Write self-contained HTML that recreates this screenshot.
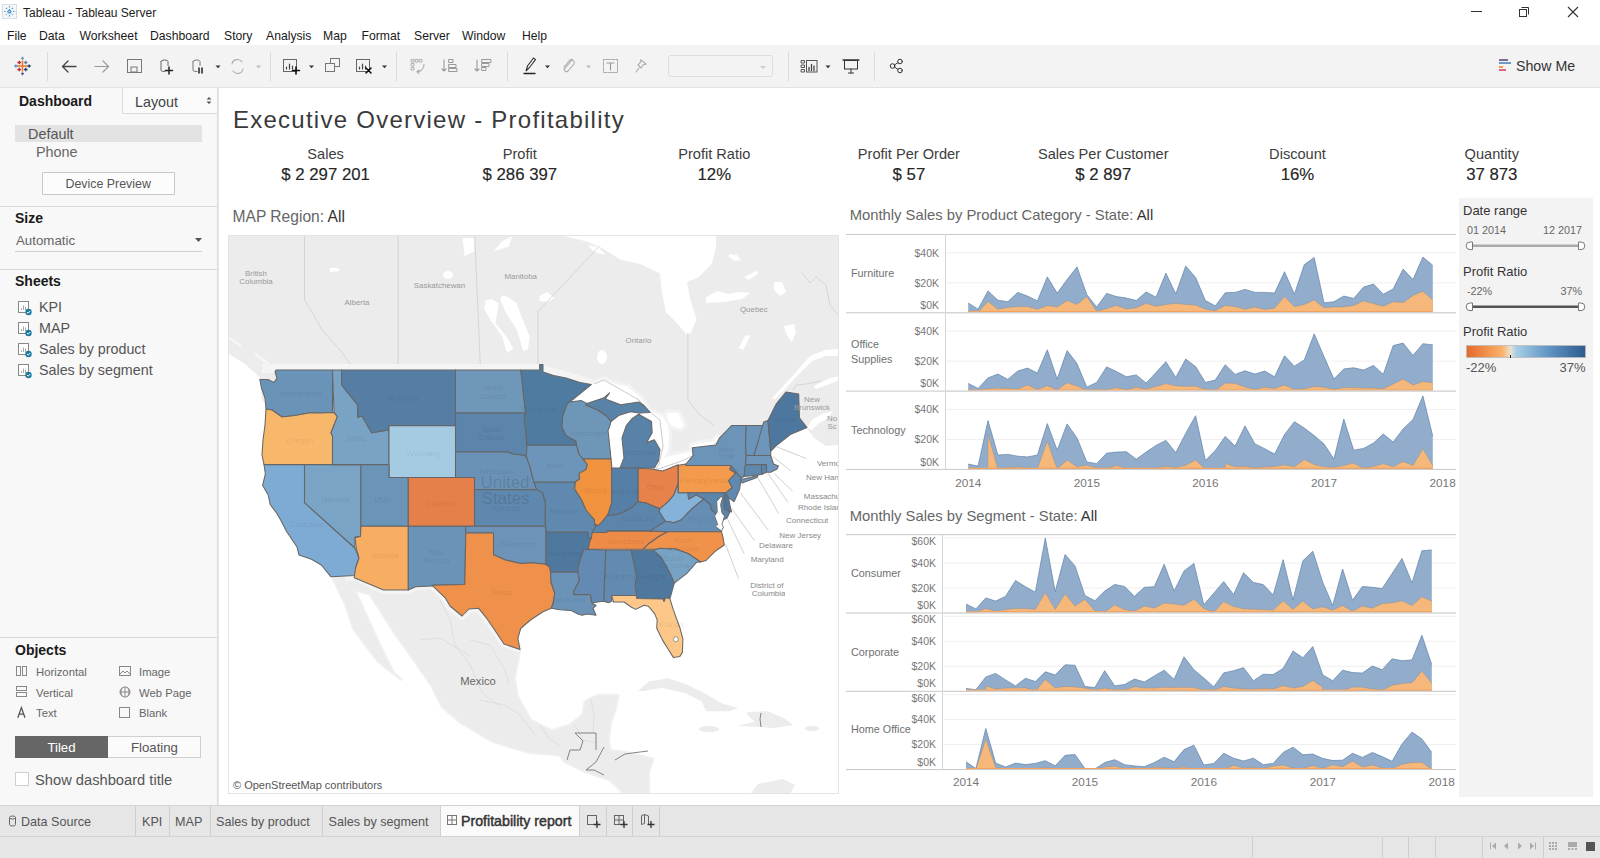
<!DOCTYPE html>
<html><head><meta charset="utf-8">
<style>
*{margin:0;padding:0;box-sizing:border-box}
html,body{width:1600px;height:858px;overflow:hidden;background:#fff;font-family:"Liberation Sans",sans-serif;color:#333}
.a{position:absolute;white-space:nowrap}
svg{position:absolute;overflow:visible}
</style></head><body>
<div class="a" style="left:0px;top:0px;width:1600px;height:45px;background:#fff;"></div>
<svg style="left:2px;top:4px" width="16" height="16" viewBox="0 0 16 16">
<rect x="0.5" y="0.5" width="14" height="14" fill="#f4f6f8" stroke="#d8dde2"/>
<g stroke="#5b9bd5" stroke-width="1.2"><path d="M7.5 2v11M2 7.5h11M4 4l7 7M11 4l-7 7" stroke-dasharray="1.6 1.4"/></g>
</svg><div class="a" style="left:23px;top:7.14px;font-size:12px;line-height:12px;color:#222;">Tableau - Tableau Server</div>
<div class="a" style="left:1471px;top:11px;width:11px;height:1px;background:#333;"></div>
<svg style="left:1518px;top:6px" width="12" height="12"><rect x="1.5" y="3.5" width="7" height="7" fill="none" stroke="#333"/><path d="M3.5 1.5h7v7" fill="none" stroke="#333"/></svg><svg style="left:1567px;top:6px" width="12" height="12"><path d="M1 1L11 11M11 1L1 11" stroke="#333" stroke-width="1.1"/></svg><div class="a" style="left:7px;top:30.47px;font-size:12.2px;line-height:12.2px;color:#1a1a1a;">File</div>
<div class="a" style="left:39px;top:30.47px;font-size:12.2px;line-height:12.2px;color:#1a1a1a;">Data</div>
<div class="a" style="left:79.5px;top:30.47px;font-size:12.2px;line-height:12.2px;color:#1a1a1a;">Worksheet</div>
<div class="a" style="left:150px;top:30.47px;font-size:12.2px;line-height:12.2px;color:#1a1a1a;">Dashboard</div>
<div class="a" style="left:224px;top:30.47px;font-size:12.2px;line-height:12.2px;color:#1a1a1a;">Story</div>
<div class="a" style="left:266px;top:30.47px;font-size:12.2px;line-height:12.2px;color:#1a1a1a;">Analysis</div>
<div class="a" style="left:323px;top:30.47px;font-size:12.2px;line-height:12.2px;color:#1a1a1a;">Map</div>
<div class="a" style="left:361.5px;top:30.47px;font-size:12.2px;line-height:12.2px;color:#1a1a1a;">Format</div>
<div class="a" style="left:414px;top:30.47px;font-size:12.2px;line-height:12.2px;color:#1a1a1a;">Server</div>
<div class="a" style="left:462px;top:30.47px;font-size:12.2px;line-height:12.2px;color:#1a1a1a;">Window</div>
<div class="a" style="left:522px;top:30.47px;font-size:12.2px;line-height:12.2px;color:#1a1a1a;">Help</div>
<div class="a" style="left:0px;top:45px;width:1600px;height:43px;background:#f3f3f3;"></div>
<div class="a" style="left:0px;top:87px;width:1600px;height:1px;background:#e3e3e3;"></div>
<div class="a" style="left:47px;top:52px;width:1px;height:29px;background:#dadada;"></div>
<div class="a" style="left:270px;top:52px;width:1px;height:29px;background:#dadada;"></div>
<div class="a" style="left:396px;top:52px;width:1px;height:29px;background:#dadada;"></div>
<div class="a" style="left:507px;top:52px;width:1px;height:29px;background:#dadada;"></div>
<div class="a" style="left:788px;top:52px;width:1px;height:29px;background:#dadada;"></div>
<div class="a" style="left:874px;top:52px;width:1px;height:29px;background:#dadada;"></div>

<svg style="left:0;top:45px" width="1600" height="43" viewBox="0 45 1600 43">
<g fill="none" stroke-linecap="round">
 <!-- tableau logo -->
 <g stroke-width="1.3" stroke-linecap="butt">
  <path d="M17 66h11M22.5 60.5v11" stroke="#e8762d" stroke-width="1.6"/>
  <path d="M17.5 62.5h3.5M19.25 60.75v3.5" stroke="#c72035"/>
  <path d="M24 62.5h3.5M25.75 60.75v3.5" stroke="#5b879b"/>
  <path d="M17.5 69.5h3.5M19.25 67.75v3.5" stroke="#c72035"/>
  <path d="M24 69.5h3.5M25.75 67.75v3.5" stroke="#1f457e"/>
  <path d="M21 58.3h3M22.5 56.8v3" stroke="#7099a6"/>
  <path d="M21 73.7h3M22.5 72.2v3" stroke="#5b6591"/>
  <path d="M14.3 66h3M15.8 64.5v3" stroke="#5b8fc2"/>
  <path d="M27.7 66h3M29.2 64.5v3" stroke="#1f447e"/>
 </g>
 <!-- back/forward -->
 <path d="M76 66.5H63M68 61l-5.5 5.5L68 72" stroke="#444" stroke-width="1.3"/>
 <path d="M95 66.5h13M103 61l5.5 5.5L103 72" stroke="#9a9a9a" stroke-width="1.2"/>
 <!-- save -->
 <rect x="127.5" y="59.5" width="14" height="13" stroke="#777" stroke-width="1"/>
 <rect x="131" y="67" width="6" height="5" stroke="#777" stroke-width="1"/>
 <!-- new data source -->
 <path d="M161 61.5v9a3.5 1.5 0 0 0 4 1M161 61.5a3.5 1.5 0 0 1 7 0v4" stroke="#666" stroke-width="1"/>
 <path d="M169 67v7M165.5 70.5h7" stroke="#222" stroke-width="1.5"/>
 <!-- pause -->
 <path d="M193 61.5v9a3.5 1.5 0 0 0 4 1M193 61.5a3.5 1.5 0 0 1 7 0v4" stroke="#777" stroke-width="1"/>
 <path d="M199 68v5M202 68v5" stroke="#222" stroke-width="1.5"/>
 <!-- refresh -->
 <path d="M232 64a5.5 5.5 0 0 1 10-2M243 69a5.5 5.5 0 0 1-10 2" stroke="#aaa" stroke-width="1.1"/>
 <!-- new worksheet -->
 <rect x="283.5" y="59.5" width="13" height="12" stroke="#666"/>
 <path d="M286.5 69v-2M289.5 69v-5M292.5 69v-3" stroke="#444" stroke-width="1.2"/>
 <path d="M296 67v7M292.5 70.5h7" stroke="#111" stroke-width="1.6"/>
 <!-- duplicate -->
 <rect x="330.5" y="58.5" width="9" height="8" stroke="#777"/>
 <rect x="325.5" y="63.5" width="9" height="8" stroke="#777" fill="#f3f3f3"/>
 <!-- clear -->
 <rect x="356.5" y="59.5" width="13" height="12" stroke="#666"/>
 <path d="M359.5 69v-2M362.5 69v-5M365.5 69v-3" stroke="#444" stroke-width="1.2"/>
 <path d="M366 68l5 5M371 68l-5 5" stroke="#111" stroke-width="1.6"/>
 <!-- swap -->
 <path d="M411.5 59.5h2.5v2.5h-2.5zM415.5 59.5h2.5v2.5h-2.5zM419.5 59.5h2.5v2.5h-2.5zM411.5 63.5h2.5v2.5h-2.5zM411.5 67.5h2.5v2.5h-2.5z" stroke="#aaa" stroke-width="0.9"/>
 <path d="M424 64.5c0 4-3 7-7 7.5M419 70l-2 1.8 2 1.7" stroke="#aaa" stroke-width="1.1"/>
 <!-- sort -->
 <path d="M444 60v11M442 69l2 2 2-2" stroke="#999" stroke-width="1.1"/>
 <path d="M449 59.5h4v3h-4zM449 64.5h7v3h-7zM449 68.5h8v3h-8z" stroke="#999" stroke-width="1"/>
 <path d="M477 60v11M475 69l2 2 2-2" stroke="#999" stroke-width="1.1"/>
 <path d="M482 59.5h9v3h-9zM482 63.5h7v3h-7zM482 67.5h4v3h-4z" stroke="#999" stroke-width="1"/>
 <!-- highlight -->
 <path d="M526 71l1.5-5 6-8 2 1.5-6 8z" stroke="#333" stroke-width="1.1"/>
 <path d="M524 73.5h11" stroke="#222" stroke-width="1.3"/>
 <!-- paperclip -->
 <path d="M572 60l-7 8a2 2 0 0 0 3 3l6-7a3 3 0 0 0-4-4l-6 7" stroke="#aaa" stroke-width="1.1"/>
 <!-- textbox -->
 <rect x="603.5" y="59.5" width="14" height="13" stroke="#aaa" stroke-dasharray="1.5 1"/>
 <path d="M607 63h7M610.5 63v7" stroke="#999" stroke-width="1.1"/>
 <!-- pin -->
 <path d="M641 60l5 4-3 1-2 3-3-3 2-2zM639 68l-3 4" stroke="#aaa" stroke-width="1.1"/>
 <!-- fit dropdown box -->
 <rect x="668.5" y="55.5" width="104" height="21" rx="2" stroke="#ddd" fill="#f3f3f3"/>
 <path d="M760 66h6l-3 3z" fill="#ccc"/>
 <!-- cards -->
 <path d="M801.5 60.5h3v2.5h-3zM801.5 65h3v2.5h-3zM801.5 69.5h3v2.5h-3z" stroke="#555"/>
 <rect x="806.5" y="60.5" width="10.5" height="11.5" stroke="#555"/>
 <path d="M809 70.5v-3M811.5 70.5v-6M814 70.5v-4.5" stroke="#444" stroke-width="1.3"/>
 <!-- presentation -->
 <path d="M843 60h16" stroke="#333" stroke-width="1.3"/>
 <rect x="844.5" y="60.5" width="13" height="8.5" stroke="#333"/>
 <path d="M851 69v4M848.5 73h5" stroke="#333"/>
 <!-- share -->
 <circle cx="892.5" cy="66" r="2.3" stroke="#333"/>
 <circle cx="900" cy="61.5" r="2.3" stroke="#333"/>
 <circle cx="900" cy="70.5" r="2.3" stroke="#333"/>
 <path d="M894.5 65l3.5-2.5M894.5 67l3.5 2.5" stroke="#333"/>
</g>
<g fill="#333">
 <path d="M215.5 65.5h5l-2.5 2.8z"/>
 <path d="M309 65.5h5l-2.5 2.8z"/>
 <path d="M382 65.5h5l-2.5 2.8z"/>
 <path d="M545 65.5h5l-2.5 2.8z"/>
 <path d="M825.5 65.5h5l-2.5 2.8z"/>
</g>
<g fill="#bbb">
 <path d="M256 65.5h5l-2.5 2.8z"/>
 <path d="M586 65.5h5l-2.5 2.8z"/>
</g>
<!-- show me -->
<rect x="1499" y="59" width="9" height="2" fill="#7b6a93"/>
<rect x="1499" y="62" width="12" height="2" fill="#6b99c8"/>
<rect x="1499" y="66" width="4" height="2" fill="#f09a4a"/>
<rect x="1499" y="69" width="7" height="2" fill="#e8637a"/>
</svg>
<div class="a" style="left:1516px;top:58.98px;font-size:14.2px;line-height:14.2px;color:#333;">Show Me</div>
<div class="a" style="left:0px;top:88px;width:218px;height:717px;background:#f8f8f8;"></div>
<div class="a" style="left:217px;top:88px;width:1px;height:717px;background:#dcdcdc;"></div>
<div class="a" style="left:122px;top:88px;width:95px;height:26px;background:#fafafa;border-left:1px solid #dcdcdc;border-bottom:1px solid #dcdcdc;"></div>
<div class="a" style="left:19px;top:94.15px;font-size:14px;line-height:14px;color:#1a1a1a;font-weight:700;">Dashboard</div>
<div class="a" style="left:135px;top:94.90px;font-size:14.3px;line-height:14.3px;color:#444;">Layout</div>
<svg style="left:206px;top:96px" width="6" height="10"><path d="M0.5 3.5L3 1 5.5 3.5zM0.5 5.5L3 8 5.5 5.5z" fill="#555"/></svg><div class="a" style="left:15px;top:125px;width:187px;height:17px;background:#e3e3e3;"></div>
<div class="a" style="left:28px;top:126.81px;font-size:14.4px;line-height:14.4px;color:#555;">Default</div>
<div class="a" style="left:36px;top:144.81px;font-size:14.4px;line-height:14.4px;color:#666;">Phone</div>
<div class="a" style="left:42px;top:172px;width:133px;height:23px;background:#fcfcfc;border:1px solid #c8c8c8;border-radius:1px;"></div>
<div class="a" style="left:65.5px;top:178.00px;font-size:12.4px;line-height:12.4px;color:#555;">Device Preview</div>
<div class="a" style="left:0px;top:206px;width:217px;height:1px;background:#dadada;"></div>
<div class="a" style="left:15px;top:211.45px;font-size:14px;line-height:14px;color:#1a1a1a;font-weight:700;">Size</div>
<div class="a" style="left:16px;top:233.74px;font-size:13.3px;line-height:13.3px;color:#666;">Automatic</div>
<div class="a" style="left:15px;top:251px;width:187px;height:1px;background:#cfcfcf;"></div>
<svg style="left:195px;top:238px" width="8" height="5"><path d="M0 0h7l-3.5 4z" fill="#555"/></svg><div class="a" style="left:0px;top:269px;width:217px;height:1px;background:#dadada;"></div>
<div class="a" style="left:15px;top:274.15px;font-size:14px;line-height:14px;color:#1a1a1a;font-weight:700;">Sheets</div>
<svg style="left:17px;top:300.09999999999997px" width="16" height="16"><rect x="1.5" y="1.5" width="10" height="11" fill="#fff" stroke="#888"/><path d="M4.5 10V8M6.5 10V5.5M8.5 10V6.5" stroke="#aaa" stroke-width="1"/><circle cx="11.5" cy="12" r="3.2" fill="#1c7aa0"/><path d="M10 12l1.2 1.2 2-2.2" stroke="#fff" stroke-width="1" fill="none"/></svg><div class="a" style="left:39px;top:300.30px;font-size:14.3px;line-height:14.3px;color:#555;">KPI</div>
<svg style="left:17px;top:321.09999999999997px" width="16" height="16"><rect x="1.5" y="1.5" width="10" height="11" fill="#fff" stroke="#888"/><path d="M4.5 10V8M6.5 10V5.5M8.5 10V6.5" stroke="#aaa" stroke-width="1"/><circle cx="11.5" cy="12" r="3.2" fill="#1c7aa0"/><path d="M10 12l1.2 1.2 2-2.2" stroke="#fff" stroke-width="1" fill="none"/></svg><div class="a" style="left:39px;top:321.30px;font-size:14.3px;line-height:14.3px;color:#555;">MAP</div>
<svg style="left:17px;top:342.09999999999997px" width="16" height="16"><rect x="1.5" y="1.5" width="10" height="11" fill="#fff" stroke="#888"/><path d="M4.5 10V8M6.5 10V5.5M8.5 10V6.5" stroke="#aaa" stroke-width="1"/><circle cx="11.5" cy="12" r="3.2" fill="#1c7aa0"/><path d="M10 12l1.2 1.2 2-2.2" stroke="#fff" stroke-width="1" fill="none"/></svg><div class="a" style="left:39px;top:342.30px;font-size:14.3px;line-height:14.3px;color:#555;">Sales by product</div>
<svg style="left:17px;top:363.09999999999997px" width="16" height="16"><rect x="1.5" y="1.5" width="10" height="11" fill="#fff" stroke="#888"/><path d="M4.5 10V8M6.5 10V5.5M8.5 10V6.5" stroke="#aaa" stroke-width="1"/><circle cx="11.5" cy="12" r="3.2" fill="#1c7aa0"/><path d="M10 12l1.2 1.2 2-2.2" stroke="#fff" stroke-width="1" fill="none"/></svg><div class="a" style="left:39px;top:363.30px;font-size:14.3px;line-height:14.3px;color:#555;">Sales by segment</div>
<div class="a" style="left:0px;top:637px;width:217px;height:1px;background:#dadada;"></div>
<div class="a" style="left:15px;top:643.15px;font-size:14px;line-height:14px;color:#1a1a1a;font-weight:700;">Objects</div>
<div class="a" style="left:36px;top:667.03px;font-size:11.3px;line-height:11.3px;color:#666;">Horizontal</div>
<div class="a" style="left:139px;top:667.03px;font-size:11.3px;line-height:11.3px;color:#666;">Image</div>
<div class="a" style="left:36px;top:687.63px;font-size:11.3px;line-height:11.3px;color:#666;">Vertical</div>
<div class="a" style="left:139px;top:687.63px;font-size:11.3px;line-height:11.3px;color:#666;">Web Page</div>
<div class="a" style="left:36px;top:708.23px;font-size:11.3px;line-height:11.3px;color:#666;">Text</div>
<div class="a" style="left:139px;top:708.23px;font-size:11.3px;line-height:11.3px;color:#666;">Blank</div>
<svg style="left:0;top:660px" width="217" height="70" viewBox="0 660 217 70">
<g fill="none" stroke="#888" stroke-width="1">
<rect x="16.5" y="666.5" width="4" height="9"/><rect x="22.5" y="666.5" width="4" height="9"/>
<rect x="16.5" y="686.5" width="10" height="4"/><rect x="16.5" y="692.5" width="10" height="4"/>
<rect x="119.5" y="666.5" width="11" height="9"/><path d="M120 674l3-3 2 2 2-2 3 3"/>
<circle cx="125" cy="692" r="5"/><path d="M120 692h10M125 687v10M122.5 687.5c-2 3-2 6 0 9M127.5 687.5c2 3 2 6 0 9"/>
<rect x="119.5" y="707.5" width="10" height="10"/>
</g>
<path d="M17.8 717.8l3.6-10.2 3.6 10.2M19 714.2h4.8" stroke="#555" stroke-width="1.3" fill="none"/>
</svg><div class="a" style="left:15px;top:736px;width:93px;height:22px;background:#666666;"></div>
<div class="a" style="left:108px;top:736px;width:93px;height:22px;background:#fbfbfb;border:1px solid #cfcfcf;border-left:none;"></div>
<div class="a" style="left:-138.5px;width:400px;text-align:center;top:740.83px;font-size:13.2px;line-height:13.2px;color:#fff;">Tiled</div>
<div class="a" style="left:-45.5px;width:400px;text-align:center;top:740.83px;font-size:13.2px;line-height:13.2px;color:#555;">Floating</div>
<div class="a" style="left:15px;top:772px;width:14px;height:14px;background:#fff;border:1px solid #cfcfcf;"></div>
<div class="a" style="left:35px;top:772.56px;font-size:14.7px;line-height:14.7px;color:#555;">Show dashboard title</div>
<div class="a" style="left:218px;top:88px;width:1382px;height:717px;background:#fff;"></div>
<div class="a" style="left:218px;top:88px;width:1px;height:717px;background:#e8e8e8;"></div>
<div class="a" style="left:233px;top:107.98px;font-size:24px;line-height:24px;color:#3a3a3a;letter-spacing:1.25px;">Executive Overview - Profitability</div>
<div class="a" style="left:125.60000000000002px;width:400px;text-align:center;top:146.94px;font-size:14.6px;line-height:14.6px;color:#3d3d3d;">Sales</div>
<div class="a" style="left:125.60000000000002px;width:400px;text-align:center;top:166.78px;font-size:16.8px;line-height:16.8px;color:#262626;-webkit-text-stroke:0.15px #262626;">$ 2 297 201</div>
<div class="a" style="left:319.79999999999995px;width:400px;text-align:center;top:146.94px;font-size:14.6px;line-height:14.6px;color:#3d3d3d;">Profit</div>
<div class="a" style="left:319.79999999999995px;width:400px;text-align:center;top:166.78px;font-size:16.8px;line-height:16.8px;color:#262626;-webkit-text-stroke:0.15px #262626;">$ 286 397</div>
<div class="a" style="left:514.3px;width:400px;text-align:center;top:146.94px;font-size:14.6px;line-height:14.6px;color:#3d3d3d;">Profit Ratio</div>
<div class="a" style="left:514.3px;width:400px;text-align:center;top:166.78px;font-size:16.8px;line-height:16.8px;color:#262626;-webkit-text-stroke:0.15px #262626;">12%</div>
<div class="a" style="left:708.9px;width:400px;text-align:center;top:146.94px;font-size:14.6px;line-height:14.6px;color:#3d3d3d;">Profit Per Order</div>
<div class="a" style="left:708.9px;width:400px;text-align:center;top:166.78px;font-size:16.8px;line-height:16.8px;color:#262626;-webkit-text-stroke:0.15px #262626;">$ 57</div>
<div class="a" style="left:903.3px;width:400px;text-align:center;top:146.94px;font-size:14.6px;line-height:14.6px;color:#3d3d3d;">Sales Per Customer</div>
<div class="a" style="left:903.3px;width:400px;text-align:center;top:166.78px;font-size:16.8px;line-height:16.8px;color:#262626;-webkit-text-stroke:0.15px #262626;">$ 2 897</div>
<div class="a" style="left:1097.5px;width:400px;text-align:center;top:146.94px;font-size:14.6px;line-height:14.6px;color:#3d3d3d;">Discount</div>
<div class="a" style="left:1097.5px;width:400px;text-align:center;top:166.78px;font-size:16.8px;line-height:16.8px;color:#262626;-webkit-text-stroke:0.15px #262626;">16%</div>
<div class="a" style="left:1291.8px;width:400px;text-align:center;top:146.94px;font-size:14.6px;line-height:14.6px;color:#3d3d3d;">Quantity</div>
<div class="a" style="left:1291.8px;width:400px;text-align:center;top:166.78px;font-size:16.8px;line-height:16.8px;color:#262626;-webkit-text-stroke:0.15px #262626;">37 873</div>
<div class="a" style="left:232.5px;top:208.59px;font-size:15.6px;line-height:15.6px;color:#666;">MAP Region: <span style="color:#333">All</span></div>
<div class="a" style="left:849.7px;top:208.47px;font-size:14.8px;line-height:14.8px;color:#666;">Monthly Sales by Product Category - State: <span style="color:#333">All</span></div>
<div class="a" style="left:849.7px;top:508.77px;font-size:14.8px;line-height:14.8px;color:#666;">Monthly Sales by Segment - State: <span style="color:#333">All</span></div>
<div class="a" style="left:1459px;top:198px;width:134px;height:599px;background:#f3f3f3;"></div>
<div class="a" style="left:1463px;top:203.70px;font-size:13px;line-height:13px;color:#333;">Date range</div>
<div class="a" style="left:1467px;top:225.06px;font-size:10.8px;line-height:10.8px;color:#666;">01 2014</div>
<div class="a" style="left:1182px;width:400px;text-align:right;top:225.06px;font-size:10.8px;line-height:10.8px;color:#666;">12 2017</div>
<div class="a" style="left:1463px;top:264.80px;font-size:13px;line-height:13px;color:#333;">Profit Ratio</div>
<div class="a" style="left:1467px;top:285.86px;font-size:10.8px;line-height:10.8px;color:#666;">-22%</div>
<div class="a" style="left:1182px;width:400px;text-align:right;top:285.86px;font-size:10.8px;line-height:10.8px;color:#666;">37%</div>
<div class="a" style="left:1463px;top:325.00px;font-size:13px;line-height:13px;color:#333;">Profit Ratio</div>
<svg style="left:1460px;top:238px" width="132" height="140" viewBox="1460 238 132 140">
<defs><linearGradient id="pg" x1="0" x2="1">
<stop offset="0" stop-color="#e3692a"/><stop offset="0.3" stop-color="#fbb26a"/><stop offset="0.37" stop-color="#e9e2d4"/><stop offset="0.42" stop-color="#a6cde4"/><stop offset="0.7" stop-color="#5e93c2"/><stop offset="1" stop-color="#2e5b8e"/>
</linearGradient></defs>
<rect x="1469" y="244.5" width="113" height="2.5" fill="#aaa"/>
<path d="M1472.5 242h-2.5a3.8 3.8 0 0 0 0 7.6h2.5z" fill="#fff" stroke="#777"/>
<path d="M1578.5 242h2.5a3.8 3.8 0 0 1 0 7.6h-2.5z" fill="#fff" stroke="#777"/>
<rect x="1469" y="305.5" width="113" height="2.5" fill="#555"/>
<path d="M1472.5 303h-2.5a3.8 3.8 0 0 0 0 7.6h2.5z" fill="#fff" stroke="#777"/>
<path d="M1578.5 303h2.5a3.8 3.8 0 0 1 0 7.6h-2.5z" fill="#fff" stroke="#777"/>
<rect x="1466.5" y="345.5" width="119" height="12" fill="url(#pg)" stroke="#bbb" stroke-width="0.8"/>
<path d="M1510.5 355v3" stroke="#222"/>
</svg><div class="a" style="left:1466px;top:361.30px;font-size:13px;line-height:13px;color:#555;">-22%</div>
<div class="a" style="left:1185.5px;width:400px;text-align:right;top:361.30px;font-size:13px;line-height:13px;color:#555;">37%</div>
<div class="a" style="left:0px;top:805px;width:1600px;height:53px;background:#e6e6e6;"></div>
<div class="a" style="left:0px;top:805px;width:1600px;height:1px;background:#d4d4d4;"></div>
<div class="a" style="left:0px;top:836px;width:1600px;height:1px;background:#d4d4d4;"></div>
<div class="a" style="left:440px;top:806px;width:139px;height:30px;background:#fafafa;"></div>
<div class="a" style="left:135px;top:806px;width:1px;height:30px;background:#cfcfcf;"></div>
<div class="a" style="left:169px;top:806px;width:1px;height:30px;background:#cfcfcf;"></div>
<div class="a" style="left:210px;top:806px;width:1px;height:30px;background:#cfcfcf;"></div>
<div class="a" style="left:322px;top:806px;width:1px;height:30px;background:#cfcfcf;"></div>
<div class="a" style="left:440px;top:806px;width:1px;height:30px;background:#cfcfcf;"></div>
<div class="a" style="left:579px;top:806px;width:1px;height:30px;background:#cfcfcf;"></div>
<div class="a" style="left:606px;top:806px;width:1px;height:30px;background:#cfcfcf;"></div>
<div class="a" style="left:632px;top:806px;width:1px;height:30px;background:#cfcfcf;"></div>
<div class="a" style="left:659px;top:806px;width:1px;height:30px;background:#cfcfcf;"></div>
<svg style="left:8px;top:815px" width="9" height="12"><path d="M1.5 2.5v7a3 1.5 0 0 0 6 0v-7a3 1.5 0 0 0-6 0a3 1.5 0 0 0 6 0" fill="none" stroke="#666"/></svg><div class="a" style="left:21px;top:815.73px;font-size:12.6px;line-height:12.6px;color:#555;">Data Source</div>
<div class="a" style="left:142px;top:815.73px;font-size:12.6px;line-height:12.6px;color:#555;">KPI</div>
<div class="a" style="left:175px;top:815.73px;font-size:12.6px;line-height:12.6px;color:#555;">MAP</div>
<div class="a" style="left:216px;top:815.73px;font-size:12.6px;line-height:12.6px;color:#555;">Sales by product</div>
<div class="a" style="left:328.5px;top:815.73px;font-size:12.6px;line-height:12.6px;color:#555;">Sales by segment</div>
<svg style="left:447px;top:815px" width="11" height="11"><g fill="none" stroke="#777"><rect x="0.5" y="0.5" width="9" height="9"/><path d="M5 0.5v9M0.5 5h9"/></g></svg><div class="a" style="left:461px;top:813.98px;font-size:14.2px;line-height:14.2px;color:#333;-webkit-text-stroke:0.45px #333;">Profitability report</div>
<svg style="left:585px;top:813px" width="70" height="16" viewBox="585 813 70 16">
<g fill="none" stroke="#666">
<rect x="587.5" y="815.5" width="9" height="9"/><path d="M597 821v7M593.5 824.5h7" stroke="#333" stroke-width="1.3"/>
<rect x="614.5" y="815.5" width="9" height="9"/><path d="M619 815.5v9M614.5 820h9"/><path d="M624 821v7M620.5 824.5h7" stroke="#333" stroke-width="1.3"/>
<path d="M641.5 815.5v9l3-1v-9zM644.5 814.5l4 1.5v8"/><path d="M651 821v7M647.5 824.5h7" stroke="#333" stroke-width="1.3"/>
</g></svg><div class="a" style="left:1252px;top:837px;width:1px;height:21px;background:#cfcfcf;"></div>
<div class="a" style="left:1382px;top:837px;width:1px;height:21px;background:#cfcfcf;"></div>
<div class="a" style="left:1408px;top:837px;width:1px;height:21px;background:#cfcfcf;"></div>
<div class="a" style="left:1435px;top:837px;width:1px;height:21px;background:#cfcfcf;"></div>
<div class="a" style="left:1482px;top:837px;width:1px;height:21px;background:#cfcfcf;"></div>
<div class="a" style="left:1543px;top:837px;width:1px;height:21px;background:#cfcfcf;"></div>
<svg style="left:1485px;top:840px" width="115" height="18" viewBox="1485 840 115 18">
<g fill="#aaa">
<path d="M1490 842.5h1v7h-1zM1496 842.5v7l-4-3.5z"/>
<path d="M1508 842.5v7l-4-3.5z"/>
<path d="M1518 842.5v7l4-3.5z"/>
<path d="M1530 842.5v7l4-3.5zM1535 842.5h1v7h-1z"/>
<path d="M1549 842h2v2h-2zM1552 842h2v2h-2zM1555 842h2v2h-2zM1549 845h2v2h-2zM1552 845h2v2h-2zM1555 845h2v2h-2zM1549 848h2v2h-2zM1552 848h2v2h-2zM1555 848h2v2h-2z"/>
<path d="M1568 842h9v5h-9zM1568 848h2v2h-2zM1571.5 848h2v2h-2zM1575 848h2v2h-2z"/>
</g>
<rect x="1586" y="842" width="9" height="9" fill="#555"/>
</svg>
<div class="a" style="left:228px;top:235px;width:611px;height:559px;background:#fff;border:1px solid #e4e4e4;"></div><svg style="left:0;top:0" width="1600" height="858" viewBox="0 0 1600 858"><defs><clipPath id="mapclip"><rect x="229" y="236" width="609" height="557"/></clipPath></defs><g clip-path="url(#mapclip)"><path d="M228 235L839 235L839 445L826 446L814 438L807 428L790 434L776 446L770 452L746 425L731.5 425.5L719 438.7L716 445L692.4 447.8L693 455.5L686 464L678.1 464.7L662.7 471L651.5 468.9L654.3 467.7L660 449.5L650 412L560 440L300 440L262 400L259.8 379.6L259.5 376.9L243.7 362.9L228 353.6Z" fill="#ececec"/><path d="M331 576.8L355 575.4L383.6 590L408.3 590L415.7 586.8L431.9 585.2L445.2 597.8L450 606L462 616L469 609L478.7 608.3L487 618.7L495.5 631.3L504 644L520 649.5L514.5 677.2L517.2 696L530.6 720.1L552 730.9L570 725L582.9 714.4L585 701.6L597.7 695.2L618 695.2L615.8 708L610.5 722.9L608.4 739.9L610.5 750.5L627.5 752.6L653 759L648.7 771.7L648.7 795L625.4 795L610.5 780.2L585 771.7L563.7 761.1L560 755L527.9 752.3L493 741.6L460.9 722.8L442 706.7L431.4 685.3L407.2 650.4L393.8 631.7L369.7 594.1L354.5 590L370 623.6L381 647.7L393 671.9L401.9 680L377.7 661.2L353.6 629L345.6 604.9L332.2 576.7Z" fill="#ececec" stroke="#f1f1f1" stroke-width="3"/><path d="M331 576.8L355 575.4L383.6 590L408.3 590L415.7 586.8L431.9 585.2L445.2 597.8L450 606L462 616L469 609L478.7 608.3L487 618.7L495.5 631.3L504 644L520 649.5L514.5 677.2L517.2 696L530.6 720.1L552 730.9L570 725L582.9 714.4L585 701.6L597.7 695.2L618 695.2L615.8 708L610.5 722.9L608.4 739.9L610.5 750.5L627.5 752.6L653 759L648.7 771.7L648.7 795L625.4 795L610.5 780.2L585 771.7L563.7 761.1L560 755L527.9 752.3L493 741.6L460.9 722.8L442 706.7L431.4 685.3L407.2 650.4L393.8 631.7L369.7 594.1L354.5 590L370 623.6L381 647.7L393 671.9L401.9 680L377.7 661.2L353.6 629L345.6 604.9L332.2 576.7Z" fill="#ececec"/><path d="M638.1 691L648.7 681.4L667.9 678.2L687 684.6L704 693.1L723.1 703.7L738 708L729.5 711.2L706.1 711.2L701.9 701.6L684.9 693.1L661.5 687.8L644.5 691Z" fill="#ececec"/><path d="M746.5 712.2L767.7 711.2L784.7 718.6L793.2 725L772 728.2L763.5 727.1L737 726.1L755 721.8L748.6 716.5Z" fill="#ececec"/><ellipse cx="709" cy="729" rx="10" ry="3.3" fill="#ececec"/><ellipse cx="812" cy="728.5" rx="7.5" ry="2.5" fill="#ececec"/><path d="M750 794l8-10 25-5 12 6-5 9z" fill="#ececec"/><path d="M564 236L716 236L716 246.5L712 263.8L698.5 277.3L687 282L690 298.5L696.5 319.6L690.8 333L687 335L677.3 323.5L665.8 312L662 292.7L660 273.5L640 264L620 259.5L602 248L587 241.5Z" fill="#fff"/><path d="M502 295.4L508 297L516.7 303.5L522 318L529.7 336.2L528 349.2L523.2 350.9L516.7 329.6L505.3 311.7L500.4 300.3Z" fill="#fff"/><path d="M485.7 300.3L492 299L498.7 303.5L495.5 323.1L508.5 339.4L513.4 349.2L507 352.5L502 336.2L490.6 319.9L484 308.4Z" fill="#fff"/><path d="M772 398.5L784 385L796 372L810 356L825 350L839 349L839 356L826 356L812 361L798 375L786 388L775 399Z" fill="#fff"/><path d="M807 428L812 420L822 414L833 411L828 418L818 424L812 430Z" fill="#fff"/><path d="M814 386L830 378L839 376L839 380L830 384L816 389Z" fill="#fff"/><path d="M569.7 402L591.3 384.5L604 379.5L615 383.8L627.7 386.6L639 396.4L646 404.8L650 412.4L644.5 406L639 402L620.7 404.8L605.3 399L609.5 392.9L604 397.8L587 403.4L581.5 400.6Z" fill="#f3f3f3" stroke="#f3f3f3" stroke-width="6" stroke-linejoin="round"/><path d="M611 421.5L619.3 415.2L630.5 411.7L639 413L632 418.7L626.3 425.7L622 438L624 458L619 468.4L613 466L611.5 458L609.5 444L608 430.6L609.5 427Z" fill="#f3f3f3" stroke="#f3f3f3" stroke-width="6" stroke-linejoin="round"/><path d="M649.6 411L662 416L668 425L669 437L668 450L663 460L656 467L658.5 460.7L660 449.5L654.3 439.7L646.6 442.5L652.2 432.7L651.5 421.5L640.3 415.2L645 411Z" fill="#f3f3f3" stroke="#f3f3f3" stroke-width="6" stroke-linejoin="round"/><path d="M667.3 413L678.5 413L684 425.2L680.4 429L671 425.2L667.3 419Z" fill="#f3f3f3" stroke="#f3f3f3" stroke-width="6" stroke-linejoin="round"/><path d="M652.4 467.2L655 461L674.8 455L693.4 451.5L693.4 456L686 463.4L678.5 465.3L662.7 471L651.5 468.9Z" fill="#f3f3f3" stroke="#f3f3f3" stroke-width="6" stroke-linejoin="round"/><path d="M691.6 445.7L700 443L714 441.5L716.8 437.3L718.6 439.2L716 445L692.4 447.8Z" fill="#f3f3f3" stroke="#f3f3f3" stroke-width="6" stroke-linejoin="round"/><path d="M569.7 402L591.3 384.5L604 379.5L615 383.8L627.7 386.6L639 396.4L646 404.8L650 412.4L644.5 406L639 402L620.7 404.8L605.3 399L609.5 392.9L604 397.8L587 403.4L581.5 400.6Z" fill="#fff"/><path d="M611 421.5L619.3 415.2L630.5 411.7L639 413L632 418.7L626.3 425.7L622 438L624 458L619 468.4L613 466L611.5 458L609.5 444L608 430.6L609.5 427Z" fill="#fff"/><path d="M649.6 411L662 416L668 425L669 437L668 450L663 460L656 467L658.5 460.7L660 449.5L654.3 439.7L646.6 442.5L652.2 432.7L651.5 421.5L640.3 415.2L645 411Z" fill="#fff"/><path d="M667.3 413L678.5 413L684 425.2L680.4 429L671 425.2L667.3 419Z" fill="#fff"/><path d="M652.4 467.2L655 461L674.8 455L693.4 451.5L693.4 456L686 463.4L678.5 465.3L662.7 471L651.5 468.9Z" fill="#fff"/><path d="M691.6 445.7L700 443L714 441.5L716.8 437.3L718.6 439.2L716 445L692.4 447.8Z" fill="#fff"/><g fill="#fff"><path d="M729 254l8 1 4 5-6 1-6-4z"/><path d="M744 277l12-6 3 2-10 7z"/><path d="M706 297l12-6 10 3 12-2 10 1-8 6-18 3-18 1z"/><path d="M774 282l8 0 4 10-6 4-6-6z"/><path d="M739 348l6-12 6-1-8 15z"/><path d="M784 326l10-2 2 8-4 10-6-8z"/><path d="M330 268l8 0 2 3-10 1z"/><path d="M462.8 238.3l11.5 0 0 13-9.8 5z"/><path d="M493.9 251.3l8-10 10-4.7-3 10z"/><ellipse cx="448" cy="275" rx="5" ry="4"/><path d="M539.5 296l8-4 6.7 6-6 4-8.7-1z"/><ellipse cx="602" cy="357" rx="5" ry="7"/><path d="M588 245l10 2 8 8-12-3z"/></g><g fill="none" stroke="#cfcfcf" stroke-width="0.8"><path d="M304.5 235V300L312 312 322 330 340 350 354 369"/><path d="M398.2 235V370"/><path d="M474.7 235L480.5 370"/><path d="M599 246.5L538 311.5V369"/><path d="M687.9 333V400L700 415 713.8 425"/><path d="M802 273l8 10 6-6 10 8 4 20 8 10"/><path d="M793 390l3-5 10-1 15-3"/></g><path d="M594 384l10-4 35 20 11 12 10 8 3 26-4 18-4 6 24-8 18-8 14-6 14-14" fill="none" stroke="#bdbdbd" stroke-width="0.8"/><g fill="none" stroke="#d9d9d9" stroke-width="0.7"><path d="M440 600l10 20 5 25 15 20 12 28 20 15"/><path d="M470 640l20 5 15 25 4 15"/><path d="M420 640l20-2 30 18"/><path d="M480 700l25 5 15 10 15 20"/><path d="M540 725l10 15 10 5"/><path d="M575 725l8 15 15 3"/><path d="M590 698l4 15-1 20"/></g><g fill="none" stroke="#777" stroke-width="0.9"><path d="M575 733h21v17"/><path d="M575 733l8 8-3 9h-10l-3 10"/><path d="M604 747l-8 15-10 8 8 0 10 5"/><path d="M615 760l10-6 15-2 8-1"/><path d="M761 713l-1 6 1 8"/></g><path d="M229 338l12 7.5M255 353.6l16.7 13" stroke="#f7f7f7" stroke-width="2" fill="none"/><path d="M262 368.5H541M541 368.5l50 15M345 577l10 -1.5 28 14h25l8-4 16-1 13 12 5 9 12 10 7-7 10-1 8 10 9 13 8 12 16 6" fill="none" stroke="#f4f4f4" stroke-width="9" stroke-linejoin="round"/><path d="M276 370L332.5 370L332.5 412.4L320 413L308.7 413L295 415.5L282 417L272 410L266 409L265 398L261.5 388L259.8 379.6L268 379.5L274 382.5L277 378L275 372Z" fill="#6a93b8" stroke="#666" stroke-width="1.05" stroke-linejoin="round"/><path d="M266 409L272 410L282 417L295 415.5L308.7 413L320 413L334 412.4L337.4 416.6L331 432.7L332.5 436L332.5 464.6L264 464.6L262 455L263 440L265 425Z" fill="#f8b86c" stroke="#666" stroke-width="1.05" stroke-linejoin="round"/><path d="M264 464.6L304.5 464.6L304.5 502.7L354.9 548L359 558L355.6 567.7L355 575.4L331 576.8L321.3 565L311.5 559.3L299 555L296.9 546.7L286.4 531.3L281.5 521.5L276.6 513L270.3 504.8L268.2 495L262.6 485.2L265.4 474Z" fill="#7eabd3" stroke="#666" stroke-width="1.05" stroke-linejoin="round"/><path d="M304.5 464.6L360.9 464.6L360.9 526.2L360.5 536.2L355 537L354.9 548L304.5 502.7Z" fill="#7aa4c5" stroke="#666" stroke-width="1.05" stroke-linejoin="round"/><path d="M332.5 370L341.6 370L341.6 385L357.7 404.8L357.7 417.3L362 416L371.7 432.7L388.5 430L389 425.6L389 464.6L332.5 464.6L332.5 436L331 432.7L337.4 416.6L334 412.4Z" fill="#79a3c5" stroke="#666" stroke-width="1.05" stroke-linejoin="round"/><path d="M341.6 370L455.5 370L455.5 425.6L389 425.6L388.5 430L371.7 432.7L362 416L357.7 417.3L357.7 404.8L341.6 385Z" fill="#567ea5" stroke="#666" stroke-width="1.05" stroke-linejoin="round"/><path d="M389 425.6L455.5 425.6L455.5 477.4L389 477.4Z" fill="#a5cbe3" stroke="#666" stroke-width="1.05" stroke-linejoin="round"/><path d="M360.9 464.6L389 464.6L389 477.4L408.3 477.4L408.3 526.2L360.9 526.2Z" fill="#6b94b9" stroke="#666" stroke-width="1.05" stroke-linejoin="round"/><path d="M408.3 477.4L474.5 477.4L474.5 526.2L408.3 526.2Z" fill="#e5804a" stroke="#666" stroke-width="1.05" stroke-linejoin="round"/><path d="M360.9 526.2L408.3 526.2L408.3 590L383.6 590L354.2 577.7L355.6 568L359 558L356.3 548.3L355 537.8L360.5 536.4Z" fill="#f7ae62" stroke="#666" stroke-width="1.05" stroke-linejoin="round"/><path d="M408.3 526.2L465.8 526.2L465.8 533L464.8 584.5L431.9 585.2L432.5 586L415.7 586.8L408.3 590Z" fill="#6b93b7" stroke="#666" stroke-width="1.05" stroke-linejoin="round"/><path d="M455.5 370L520.8 370L522 380L523.5 395L525.7 412.9L455.5 412.9Z" fill="#6f97ba" stroke="#666" stroke-width="1.05" stroke-linejoin="round"/><path d="M455.5 412.9L525.7 412.9L524.3 416L527 445.3L526.4 456.5L524.3 455.4L513 454L507.5 451.9L455.5 451.9Z" fill="#5c85ac" stroke="#666" stroke-width="1.05" stroke-linejoin="round"/><path d="M455.5 451.9L507.5 451.9L513 454L524.3 455.4L527 458.2L530 466.6L532.7 477.8L536.2 488.3L537 489.7L474.5 489.7L474.5 477.4L455.5 477.4Z" fill="#6a92b6" stroke="#666" stroke-width="1.05" stroke-linejoin="round"/><path d="M474.5 489.7L537 489.7L542.5 492.4L544.6 500L545.3 500L545.3 526.2L474.5 526.2Z" fill="#5f88ae" stroke="#666" stroke-width="1.05" stroke-linejoin="round"/><path d="M465.8 526.2L545.3 526.2L545.9 533L545.9 564.3L531.9 562.8L520.7 563.5L505.3 560L493.5 554.7L493.5 533L465.8 533Z" fill="#6d94b8" stroke="#666" stroke-width="1.05" stroke-linejoin="round"/><path d="M465.8 533L493.5 533L493.5 554.7L505.3 560L520.7 563.5L531.9 562.8L545.9 564.3L549.8 567L550.5 572L551.2 583L554.7 593L553.3 602.7L551.2 608.3L543 611.7L530.5 620L520.7 628.5L517.9 638.3L520 649.5L504 644L495.5 631.3L487 618.7L478.7 608.3L469 609L462 616L450 606L445.2 597.8L431.9 585.2L464.8 584.5Z" fill="#ef914b" stroke="#666" stroke-width="1.05" stroke-linejoin="round"/><path d="M520.8 370L539.6 370L539.6 364.5L543 364.5L543 372L553.6 375.4L566 378L580 382.4L591.3 384.5L569.7 402L567.5 403.4L562.7 416L562 427L566 435.5L576 441L576.6 445.3L527 445.3L524.3 416L525.7 412.9L523.5 395L522 380Z" fill="#507ba1" stroke="#666" stroke-width="1.05" stroke-linejoin="round"/><path d="M527 445.3L576.6 445.3L578.9 454L583 458.9L587.3 464.5L586 469.4L579 473.6L579.6 479L575.4 482.2L534 482.2L532.7 477.8L530 466.6L527 458.2L526.4 456.5Z" fill="#6d95b9" stroke="#666" stroke-width="1.05" stroke-linejoin="round"/><path d="M534 482.2L575.4 482.2L574.7 489L581.7 500L586 510L594.3 519.7L595 525.3L596.4 525.3L592.9 531L591.5 537.9L588 537.9L588 532.3L546 532.3L545.9 526.2L545.3 526.2L545.3 500L544.6 500L542.5 492.4L537 489.7L536.2 488.3Z" fill="#5f89af" stroke="#666" stroke-width="1.05" stroke-linejoin="round"/><path d="M569.7 402L581.5 400.6L587 403.4L585.7 404.8L598.3 410.3L606.7 416L611 421.5L609.5 427L608 430.6L609.5 444L611 458.9L583 458.9L578.9 454L576.6 445.3L576 441L566 435.5L562 427L562.7 416L567.5 403.4Z" fill="#6e96b9" stroke="#666" stroke-width="1.05" stroke-linejoin="round"/><path d="M587 403.4L604 397.8L609.5 392.9L605.3 399L620.7 404.8L639 402L644.5 406L650 412.4L639 413L630.5 411.7L619.3 415.2L611 421.5L606.7 416L598.3 410.3L585.7 404.8Z" fill="#5982a9" stroke="#666" stroke-width="1.05" stroke-linejoin="round"/><path d="M639 414L640.3 415.2L651.5 421.5L652.2 432.7L646.6 442.5L654.3 439.7L660 449.5L658.5 460.7L654.3 467.9L620 467.9L624 458L622 438L626.3 425.7L632 418.7Z" fill="#5982a9" stroke="#666" stroke-width="1.05" stroke-linejoin="round"/><path d="M583 458.9L611 458.9L611.7 466.3L611.7 503L608 514.3L602.6 521.3L598.4 525.5L595 525.3L594.3 519.7L586 510L581.7 500L574.7 489L575.4 482.2L579.6 479L579 473.6L586 469.4L587.3 464.5Z" fill="#f1923f" stroke="#666" stroke-width="1.05" stroke-linejoin="round"/><path d="M611.7 467.9L638.25 467.9L638.25 501.7L632 507.3L625 511.5L618 514.3L608.2 515.7L608 514.3L611.7 503Z" fill="#557fa6" stroke="#666" stroke-width="1.05" stroke-linejoin="round"/><path d="M638.25 468.2L651.5 468.9L662.7 471L678.1 464.7L678.1 483.6L674 494.8L668.3 501.7L660 508.7L653 506L646 503L638.25 501.7Z" fill="#e6824a" stroke="#666" stroke-width="1.05" stroke-linejoin="round"/><path d="M594.2 524L598.4 525.5L602.6 521.3L608 514.3L608.2 515.7L618 514.3L625 511.5L632 507.3L638.25 501.7L646 503L653 506L660 508.7L659.2 511.5L665.5 521.3L650 531.1L606.8 531.1L606.8 532.5L592.2 532.5L592.9 531L596.4 525.3Z" fill="#5c85ac" stroke="#666" stroke-width="1.05" stroke-linejoin="round"/><path d="M592.2 532.5L606.8 532.5L606.8 531.1L650 531.1L667.6 531.8L658.5 536.7L648.7 543.7L643 549.3L588 549.3L590 540L591.5 537.9Z" fill="#ee8b47" stroke="#666" stroke-width="1.05" stroke-linejoin="round"/><path d="M678.1 483.6L678.1 492.7L688 492.7L688.6 499L696.3 494.8L704 499L699 503L692 508.7L681 520L674 522.7L665.5 521.3L659.2 511.5L660 508.7L668.3 501.7L674 494.8Z" fill="#84b2d9" stroke="#666" stroke-width="1.05" stroke-linejoin="round"/><path d="M650 531.1L665.5 521.3L674 522.7L681 520L692 508.7L699 503L704 499L710.3 504.5L711.7 510L717.3 514.3L718.7 524L721.5 531.8L667.6 531.8Z" fill="#668eb5" stroke="#666" stroke-width="1.05" stroke-linejoin="round"/><path d="M678.4 465.2L686 464L686 465.4L730.8 465.4L730 469.5L735.7 473L728.7 480.7L732.2 487.7L726 492.7L678.4 492.7Z" fill="#f39a4c" stroke="#666" stroke-width="1.05" stroke-linejoin="round"/><path d="M688 492.7L724.3 492.7L724.3 508.7L729.9 512L727 518L721 521L717.3 514.3L711.7 510L710.3 504.5L704 499L696.3 494.8L688.6 499Z" fill="#5c85ac" stroke="#666" stroke-width="1.05" stroke-linejoin="round"/><path d="M724.3 492.7L727.5 492.7L728.5 497.6L729.9 505L731.5 512L724.3 508.7Z" fill="#4e779f" stroke="#666" stroke-width="1.05" stroke-linejoin="round"/><path d="M730.8 465.4L741.3 478L740 486.3L739.6 489.2L734 501.7L728.5 497.6L726 492.7L732.2 487.7L728.7 480.7L735.7 473L730 469.5Z" fill="#5f89b1" stroke="#666" stroke-width="1.05" stroke-linejoin="round"/><path d="M686 464L693 455.5L692.4 447.8L716 445L719 438.7L731.5 425.5L746.2 425.5L745.5 444L746.2 455.5L745.5 464.6L744 476.5L741.3 478L730.8 465.4L686 465.4Z" fill="#6c94b8" stroke="#666" stroke-width="1.05" stroke-linejoin="round"/><path d="M741.3 479.5L758 475.5L757 477.5L742 483Z" fill="#6c94b8" stroke="#666" stroke-width="1.05" stroke-linejoin="round"/><path d="M746.2 425.5L763.7 425.5L754 455.5L746.2 455.5L745.5 444Z" fill="#6c94b8" stroke="#666" stroke-width="1.05" stroke-linejoin="round"/><path d="M763.7 422L768 420.6L770.7 452.7L770.7 455.5L754 455.5Z" fill="#6e96ba" stroke="#666" stroke-width="1.05" stroke-linejoin="round"/><path d="M768 420.6L776.3 403.8L786 392L798.7 394L799.4 417.8L807 427.5L790.3 434.5L776.3 445.7L770.7 451.3Z" fill="#4e779f" stroke="#666" stroke-width="1.05" stroke-linejoin="round"/><path d="M746.2 455.5L770.7 455.5L773.5 464L778.4 466L777 469L770.7 472.3L766.5 472.3L766.5 464.6L745.5 464.6Z" fill="#6e96ba" stroke="#666" stroke-width="1.05" stroke-linejoin="round"/><path d="M745.5 464.6L761.6 464.6L761.6 474.5L744 476.5Z" fill="#5f88ad" stroke="#666" stroke-width="1.05" stroke-linejoin="round"/><path d="M761.6 464.6L766.5 464.6L766.5 472.3L761.6 474.5Z" fill="#5b85ac" stroke="#666" stroke-width="1.05" stroke-linejoin="round"/><path d="M667.6 531.8L721.5 531.8L722.9 536.7L724.3 545L715.9 550.7L706 560.5L700.5 562L688 553.5L674 548.6L654.3 549.3L643 549.3L648.7 543.7L658.5 536.7Z" fill="#f0924a" stroke="#666" stroke-width="1.05" stroke-linejoin="round"/><path d="M653.3 550.3L660.3 548.2L670 549L674 548.6L688 553.5L700.5 562L696.6 562.2L686.9 573.4L674.3 583.1L670 573.4L661.7 558Z" fill="#78a2c4" stroke="#666" stroke-width="1.05" stroke-linejoin="round"/><path d="M631 550.3L653.3 550.3L661.7 558L670 573.4L674.3 583.1L670.8 595.7L669.8 598.4L665.6 597.8L664 601.5L663 598.9L636.7 598.4L636.5 595.5L635 586L636.5 576.2Z" fill="#4f789f" stroke="#666" stroke-width="1.05" stroke-linejoin="round"/><path d="M605.7 550.3L631 550.3L636.5 576.2L635 586L636.5 595.5L611.5 595.5L612 601L608.5 602.7L603.6 601.3Z" fill="#638bb2" stroke="#666" stroke-width="1.05" stroke-linejoin="round"/><path d="M588 549.3L605.7 550.3L603.6 601.3L591.7 602.7L590.3 594.6L573.6 594.6L573.6 591.5L579.2 580.3L577.8 572L577.8 567.8L580.6 558L583.4 549.6Z" fill="#628ab2" stroke="#666" stroke-width="1.05" stroke-linejoin="round"/><path d="M550.5 572L577.8 572L579.2 580.3L573.6 591.5L573.6 594.6L590.3 594.6L591.7 602.7L596 605.5L593 608.3L596 615.3L587.6 614L582 615.3L577.8 614L570.8 610.4L559.6 609.7L551.2 608.3L553.3 602.7L554.7 593L551.2 583Z" fill="#6b93b8" stroke="#666" stroke-width="1.05" stroke-linejoin="round"/><path d="M546 532.3L588 532.3L588 537.9L591.5 537.9L590 540L588 549.3L583.4 549.6L580.6 558L577.8 567.8L577.8 572L550.5 572L549.8 567L545.9 564.3Z" fill="#4f789f" stroke="#666" stroke-width="1.05" stroke-linejoin="round"/><path d="M611.5 595.5L636.5 595.5L636.7 598.4L663 598.9L664 601.5L665.6 597.8L669.8 598.4L673.5 610.4L679.7 627.2L682.9 638.8L682.4 652.4L679.7 656.6L673.5 657.6L668.2 649.3L663 640.9L658.8 632.5L656.7 628.3L657.2 619.9L654.6 613.6L648.3 606.2L644 605.2L635.7 609.4L631.5 607.3L624.1 602L613.6 602Z" fill="#fdc78a" stroke="#666" stroke-width="1.05" stroke-linejoin="round"/><path d="M721.5 496L716.7 501.4 717.2 512 714.6 516.1 717.7 524.5 715.6 526.6 721.5 531 723.5 527 722 524.5 724.5 516.1 722 513 720.6 504.6 722.5 498Z" fill="#fff" stroke="#666" stroke-width="0.9"/><ellipse cx="675.8" cy="639.3" rx="2.3" ry="2.6" fill="#fff" stroke="#777" stroke-width="0.7"/><g font-family="Liberation Sans" font-size="8" fill="#000" fill-opacity="0.1" text-anchor="middle"><text x="300.3" y="396">Washington</text><text x="299.7" y="442.7">Oregon</text><text x="306.6" y="526.6">California</text><text x="335.3" y="502">Nevada</text><text x="356.3" y="441.3">Idaho</text><text x="402.8" y="401.3">Montana</text><text x="422.9" y="456">Wyoming</text><text x="382.9" y="502.4">Utah</text><text x="441.6" y="505.9">Colorado</text><text x="385" y="558.3">Arizona</text><text x="436.7" y="554.8">New</text><text x="436.7" y="562.5">Mexico</text><text x="493.5" y="390.3">North</text><text x="493.5" y="398.7">Dakota</text><text x="491.4" y="431.5">South</text><text x="491.4" y="439.6">Dakota</text><text x="496.3" y="474.3">Nebraska</text><text x="506" y="511">Kansas</text><text x="517.3" y="547.2">Oklahoma</text><text x="501" y="595.2">Texas</text><text x="539.7" y="412">Minnesota</text><text x="555" y="468.2">Iowa</text><text x="564.9" y="514.3">Missouri</text><text x="565" y="555.6">Arkansas</text><text x="568" y="601.5">Louisiana</text><text x="588.5" y="435.7">Wisconsin</text><text x="640.3" y="454.6">Michigan</text><text x="595.7" y="493.3">Illinois</text><text x="625" y="493.6">Indiana</text><text x="655" y="490">Ohio</text><text x="637.6" y="520.8">Kentucky</text><text x="625" y="544">Tennessee</text><text x="619.7" y="578.5">Alabama</text><text x="650.5" y="579">Georgia</text><text x="671.5" y="626.7">Florida</text><text x="674" y="560.7">South</text><text x="674" y="568.4">Carolina</text><text x="683.7" y="542.5">North</text><text x="683.7" y="551">Carolina</text><text x="700.5" y="520.8">Virginia</text><text x="704" y="483">Pennsylvania</text><text x="726.6" y="451.5">New</text><text x="726.6" y="459.2">York</text><text x="786" y="422">Maine</text></g><g font-family="Liberation Sans" font-size="17" fill="#000" fill-opacity="0.13" text-anchor="middle"><text x="505" y="487.5">United</text><text x="505.5" y="503.5">States</text></g><g stroke="#c4c4c4" stroke-width="0.8" fill="none"><path d="M775.9 446.5L806.6 458.6"/><path d="M773.1 456.8L790.8 470.7"/><path d="M774 473.5L792.7 491.2"/><path d="M767.5 472.6L788 502.4"/><path d="M758.2 478.2L778.7 513.6"/><path d="M740.5 493.1L768.4 530.4"/><path d="M731.2 508L754.5 540.6"/><path d="M727.5 519.2L744.2 553.7"/><path d="M725.6 544.3L738.6 578.8"/></g></g></svg><div class="a" style="left:816.9px;top:460.23px;font-size:8.0px;line-height:8.0px;color:#888;max-width:21px;overflow:hidden;">Vermont</div>
<div class="a" style="left:806px;top:473.83px;font-size:8.0px;line-height:8.0px;color:#888;max-width:32px;overflow:hidden;">New Hampshire</div>
<div class="a" style="left:803.8px;top:492.83px;font-size:8.0px;line-height:8.0px;color:#888;max-width:34px;overflow:hidden;">Massachusetts</div>
<div class="a" style="left:797.9px;top:504.03px;font-size:8.0px;line-height:8.0px;color:#888;max-width:40px;overflow:hidden;">Rhode Island</div>
<div class="a" style="left:786.1px;top:517.03px;font-size:8.0px;line-height:8.0px;color:#888;max-width:51px;overflow:hidden;">Connecticut</div>
<div class="a" style="left:779.3px;top:531.93px;font-size:8.0px;line-height:8.0px;color:#888;max-width:58px;overflow:hidden;">New Jersey</div>
<div class="a" style="left:759.1px;top:541.83px;font-size:8.0px;line-height:8.0px;color:#888;max-width:78px;overflow:hidden;">Delaware</div>
<div class="a" style="left:750.7px;top:556.23px;font-size:8.0px;line-height:8.0px;color:#888;max-width:87px;overflow:hidden;">Maryland</div>
<div class="a" style="left:750.2px;top:581.73px;font-size:8.0px;line-height:8.0px;color:#888;max-width:87px;overflow:hidden;">District of</div>
<div class="a" style="left:751.7px;top:589.73px;font-size:8.0px;line-height:8.0px;color:#888;max-width:86px;overflow:hidden;">Columbia</div>
<div class="a" style="left:56px;width:400px;text-align:center;top:270.31px;font-size:7.9px;line-height:7.9px;color:#999;">British</div>
<div class="a" style="left:56px;width:400px;text-align:center;top:278.31px;font-size:7.9px;line-height:7.9px;color:#999;">Columbia</div>
<div class="a" style="left:157px;width:400px;text-align:center;top:299.31px;font-size:7.9px;line-height:7.9px;color:#999;">Alberta</div>
<div class="a" style="left:239.5px;width:400px;text-align:center;top:281.81px;font-size:7.9px;line-height:7.9px;color:#999;">Saskatchewan</div>
<div class="a" style="left:320.70000000000005px;width:400px;text-align:center;top:273.31px;font-size:7.9px;line-height:7.9px;color:#999;">Manitoba</div>
<div class="a" style="left:438.5px;width:400px;text-align:center;top:337.31px;font-size:7.9px;line-height:7.9px;color:#999;">Ontario</div>
<div class="a" style="left:553.8px;width:400px;text-align:center;top:306.31px;font-size:7.9px;line-height:7.9px;color:#999;">Quebec</div>
<div class="a" style="left:612px;width:400px;text-align:center;top:396.31px;font-size:7.9px;line-height:7.9px;color:#999;">New</div>
<div class="a" style="left:612px;width:400px;text-align:center;top:404.31px;font-size:7.9px;line-height:7.9px;color:#999;">Brunswick</div>
<div class="a" style="left:632px;width:400px;text-align:center;top:415.31px;font-size:7.9px;line-height:7.9px;color:#999;">No</div>
<div class="a" style="left:632px;width:400px;text-align:center;top:423.31px;font-size:7.9px;line-height:7.9px;color:#999;">Sc</div>
<div class="a" style="left:278px;width:400px;text-align:center;top:676.02px;font-size:11.2px;line-height:11.2px;color:#666;">Mexico</div>
<div class="a" style="left:233px;top:779.69px;font-size:11px;line-height:11px;color:#555;">© OpenStreetMap contributors</div>

<svg style="left:0;top:0" width="1600" height="858" viewBox="0 0 1600 858"><defs><clipPath id="cp968_0"><rect x="946" y="234.5" width="510" height="77.8"/></clipPath><clipPath id="cp968_1"><rect x="946" y="312.8" width="510" height="77.8"/></clipPath><clipPath id="cp968_2"><rect x="946" y="391.1" width="510" height="77.8"/></clipPath></defs><path d="M946 252.8H1456" stroke="#efefef" stroke-width="1"/><path d="M946 282.8H1456" stroke="#efefef" stroke-width="1"/><path d="M946 312.8H1456" stroke="#efefef" stroke-width="1"/><path d="M946 331.1H1456" stroke="#efefef" stroke-width="1"/><path d="M946 361.1H1456" stroke="#efefef" stroke-width="1"/><path d="M946 391.1H1456" stroke="#efefef" stroke-width="1"/><path d="M946 409.4H1456" stroke="#efefef" stroke-width="1"/><path d="M946 439.4H1456" stroke="#efefef" stroke-width="1"/><path d="M946 469.4H1456" stroke="#efefef" stroke-width="1"/><g clip-path="url(#cp968_0)"><path d="M968.2 312.3L968.2 302.9L978.1 309.2L988.0 290.9L997.9 300.2L1007.8 301.7L1017.7 292.4L1027.5 296.1L1037.4 300.9L1047.3 276.9L1057.2 293.1L1067.1 279.6L1077.0 266.9L1086.8 294.6L1096.7 307.1L1106.6 293.4L1116.5 296.6L1126.4 298.1L1136.3 300.6L1146.1 291.9L1156.0 297.2L1165.9 273.2L1175.8 293.9L1185.7 266.1L1195.6 277.4L1205.4 300.6L1215.3 305.9L1225.2 292.8L1235.1 292.4L1245.0 289.4L1254.9 292.4L1264.7 292.4L1274.6 293.1L1284.5 271.7L1294.4 294.2L1304.3 264.6L1314.2 257.6L1324.0 302.9L1333.9 301.8L1343.8 296.1L1353.7 298.4L1363.6 287.1L1373.5 284.1L1383.3 294.2L1393.2 288.9L1403.1 269.1L1413.0 279.6L1422.9 257.1L1432.8 265.4L1432.8 312.3Z" fill="#8eaac9" fill-opacity="0.97"/><path d="M968.2 302.9L978.1 309.2L988.0 290.9L997.9 300.2L1007.8 301.7L1017.7 292.4L1027.5 296.1L1037.4 300.9L1047.3 276.9L1057.2 293.1L1067.1 279.6L1077.0 266.9L1086.8 294.6L1096.7 307.1L1106.6 293.4L1116.5 296.6L1126.4 298.1L1136.3 300.6L1146.1 291.9L1156.0 297.2L1165.9 273.2L1175.8 293.9L1185.7 266.1L1195.6 277.4L1205.4 300.6L1215.3 305.9L1225.2 292.8L1235.1 292.4L1245.0 289.4L1254.9 292.4L1264.7 292.4L1274.6 293.1L1284.5 271.7L1294.4 294.2L1304.3 264.6L1314.2 257.6L1324.0 302.9L1333.9 301.8L1343.8 296.1L1353.7 298.4L1363.6 287.1L1373.5 284.1L1383.3 294.2L1393.2 288.9L1403.1 269.1L1413.0 279.6L1422.9 257.1L1432.8 265.4" fill="none" stroke="#5f83aa" stroke-width="0.9" stroke-opacity="0.8"/><path d="M968.2 312.3L968.2 312.3L978.1 312.3L988.0 301.4L997.9 309.2L1007.8 307.4L1017.7 306.6L1027.5 306.6L1037.4 309.2L1047.3 305.6L1057.2 306.9L1067.1 300.6L1077.0 304.4L1086.8 296.6L1096.7 311.6L1106.6 308.6L1116.5 305.4L1126.4 308.9L1136.3 307.7L1146.1 303.3L1156.0 306.2L1165.9 304.4L1175.8 303.3L1185.7 304.4L1195.6 305.1L1205.4 309.2L1215.3 310.7L1225.2 305.4L1235.1 306.6L1245.0 309.3L1254.9 306.9L1264.7 309.6L1274.6 308.1L1284.5 296.6L1294.4 306.6L1304.3 304.4L1314.2 299.9L1324.0 307.7L1333.9 306.9L1343.8 306.9L1353.7 305.4L1363.6 300.9L1373.5 303.6L1383.3 306.3L1393.2 301.7L1403.1 302.6L1413.0 295.4L1422.9 291.3L1432.8 299.9L1432.8 312.3Z" fill="#f5b77a"/><path d="M968.2 312.3L978.1 312.3L988.0 301.4L997.9 309.2L1007.8 307.4L1017.7 306.6L1027.5 306.6L1037.4 309.2L1047.3 305.6L1057.2 306.9L1067.1 300.6L1077.0 304.4L1086.8 296.6L1096.7 311.6L1106.6 308.6L1116.5 305.4L1126.4 308.9L1136.3 307.7L1146.1 303.3L1156.0 306.2L1165.9 304.4L1175.8 303.3L1185.7 304.4L1195.6 305.1L1205.4 309.2L1215.3 310.7L1225.2 305.4L1235.1 306.6L1245.0 309.3L1254.9 306.9L1264.7 309.6L1274.6 308.1L1284.5 296.6L1294.4 306.6L1304.3 304.4L1314.2 299.9L1324.0 307.7L1333.9 306.9L1343.8 306.9L1353.7 305.4L1363.6 300.9L1373.5 303.6L1383.3 306.3L1393.2 301.7L1403.1 302.6L1413.0 295.4L1422.9 291.3L1432.8 299.9" fill="none" stroke="#8a8f9a" stroke-width="0.8" stroke-opacity="0.6"/><path d="M968.2 311.7H1432.8" stroke="#f2a25e" stroke-width="1.2"/></g><g clip-path="url(#cp968_1)"><path d="M968.2 390.6L968.2 383.4L978.1 388.4L988.0 377.9L997.9 374.1L1007.8 379.4L1017.7 371.1L1027.5 368.1L1037.4 373.1L1047.3 349.8L1057.2 379.1L1067.1 350.6L1077.0 363.6L1086.8 387.2L1096.7 382.4L1106.6 366.9L1116.5 371.6L1126.4 376.8L1136.3 374.9L1146.1 383.1L1156.0 372.6L1165.9 361.7L1175.8 377.4L1185.7 359.1L1195.6 366.6L1205.4 382.4L1215.3 380.1L1225.2 364.8L1235.1 374.4L1245.0 370.8L1254.9 374.1L1264.7 371.1L1274.6 376.8L1284.5 355.8L1294.4 366.2L1304.3 359.9L1314.2 333.9L1324.0 356.6L1333.9 379.1L1343.8 368.9L1353.7 367.8L1363.6 370.1L1373.5 365.4L1383.3 374.4L1393.2 345.6L1403.1 343.1L1413.0 355.4L1422.9 343.7L1432.8 344.9L1432.8 390.6Z" fill="#8eaac9" fill-opacity="0.97"/><path d="M968.2 383.4L978.1 388.4L988.0 377.9L997.9 374.1L1007.8 379.4L1017.7 371.1L1027.5 368.1L1037.4 373.1L1047.3 349.8L1057.2 379.1L1067.1 350.6L1077.0 363.6L1086.8 387.2L1096.7 382.4L1106.6 366.9L1116.5 371.6L1126.4 376.8L1136.3 374.9L1146.1 383.1L1156.0 372.6L1165.9 361.7L1175.8 377.4L1185.7 359.1L1195.6 366.6L1205.4 382.4L1215.3 380.1L1225.2 364.8L1235.1 374.4L1245.0 370.8L1254.9 374.1L1264.7 371.1L1274.6 376.8L1284.5 355.8L1294.4 366.2L1304.3 359.9L1314.2 333.9L1324.0 356.6L1333.9 379.1L1343.8 368.9L1353.7 367.8L1363.6 370.1L1373.5 365.4L1383.3 374.4L1393.2 345.6L1403.1 343.1L1413.0 355.4L1422.9 343.7L1432.8 344.9" fill="none" stroke="#5f83aa" stroke-width="0.9" stroke-opacity="0.8"/><path d="M968.2 390.6L968.2 389.9L978.1 390.6L988.0 388.7L997.9 388.1L1007.8 388.4L1017.7 389.1L1027.5 384.9L1037.4 389.6L1047.3 385.7L1057.2 389.9L1067.1 382.7L1077.0 386.1L1086.8 390.6L1096.7 389.9L1106.6 389.9L1116.5 387.6L1126.4 389.9L1136.3 387.3L1146.1 389.1L1156.0 386.6L1165.9 383.6L1175.8 385.7L1185.7 386.4L1195.6 386.1L1205.4 389.6L1215.3 390.6L1225.2 383.1L1235.1 383.4L1245.0 386.9L1254.9 389.4L1264.7 387.3L1274.6 388.4L1284.5 385.1L1294.4 389.6L1304.3 388.7L1314.2 386.6L1324.0 387.2L1333.9 389.4L1343.8 387.6L1353.7 387.6L1363.6 388.1L1373.5 388.1L1383.3 388.7L1393.2 383.9L1403.1 379.1L1413.0 384.9L1422.9 381.6L1432.8 382.7L1432.8 390.6Z" fill="#f5b77a"/><path d="M968.2 389.9L978.1 390.6L988.0 388.7L997.9 388.1L1007.8 388.4L1017.7 389.1L1027.5 384.9L1037.4 389.6L1047.3 385.7L1057.2 389.9L1067.1 382.7L1077.0 386.1L1086.8 390.6L1096.7 389.9L1106.6 389.9L1116.5 387.6L1126.4 389.9L1136.3 387.3L1146.1 389.1L1156.0 386.6L1165.9 383.6L1175.8 385.7L1185.7 386.4L1195.6 386.1L1205.4 389.6L1215.3 390.6L1225.2 383.1L1235.1 383.4L1245.0 386.9L1254.9 389.4L1264.7 387.3L1274.6 388.4L1284.5 385.1L1294.4 389.6L1304.3 388.7L1314.2 386.6L1324.0 387.2L1333.9 389.4L1343.8 387.6L1353.7 387.6L1363.6 388.1L1373.5 388.1L1383.3 388.7L1393.2 383.9L1403.1 379.1L1413.0 384.9L1422.9 381.6L1432.8 382.7" fill="none" stroke="#8a8f9a" stroke-width="0.8" stroke-opacity="0.6"/><path d="M968.2 390.0H1432.8" stroke="#f2a25e" stroke-width="1.2"/></g><g clip-path="url(#cp968_2)"><path d="M968.2 468.90000000000003L968.2 464.1L978.1 466.1L988.0 420.6L997.9 455.1L1007.8 454.4L1017.7 456.2L1027.5 456.9L1037.4 455.1L1047.3 423.6L1057.2 450.2L1067.1 423.9L1077.0 437.9L1086.8 461.9L1096.7 463.7L1106.6 453.2L1116.5 452.1L1126.4 451.7L1136.3 459.2L1146.1 452.1L1156.0 445.4L1165.9 440.4L1175.8 452.6L1185.7 433.4L1195.6 415.7L1205.4 460.4L1215.3 450.6L1225.2 436.4L1235.1 446.1L1245.0 425.9L1254.9 443.9L1264.7 448.7L1274.6 454.1L1284.5 434.6L1294.4 421.7L1304.3 428.1L1314.2 435.6L1324.0 443.9L1333.9 458.9L1343.8 419.1L1353.7 450.2L1363.6 448.4L1373.5 443.1L1383.3 434.1L1393.2 442.1L1403.1 428.9L1413.0 419.6L1422.9 395.9L1432.8 436.4L1432.8 468.90000000000003Z" fill="#8eaac9" fill-opacity="0.97"/><path d="M968.2 464.1L978.1 466.1L988.0 420.6L997.9 455.1L1007.8 454.4L1017.7 456.2L1027.5 456.9L1037.4 455.1L1047.3 423.6L1057.2 450.2L1067.1 423.9L1077.0 437.9L1086.8 461.9L1096.7 463.7L1106.6 453.2L1116.5 452.1L1126.4 451.7L1136.3 459.2L1146.1 452.1L1156.0 445.4L1165.9 440.4L1175.8 452.6L1185.7 433.4L1195.6 415.7L1205.4 460.4L1215.3 450.6L1225.2 436.4L1235.1 446.1L1245.0 425.9L1254.9 443.9L1264.7 448.7L1274.6 454.1L1284.5 434.6L1294.4 421.7L1304.3 428.1L1314.2 435.6L1324.0 443.9L1333.9 458.9L1343.8 419.1L1353.7 450.2L1363.6 448.4L1373.5 443.1L1383.3 434.1L1393.2 442.1L1403.1 428.9L1413.0 419.6L1422.9 395.9L1432.8 436.4" fill="none" stroke="#5f83aa" stroke-width="0.9" stroke-opacity="0.8"/><path d="M968.2 468.90000000000003L968.2 473.8L978.1 1595.8L988.0 434.1L997.9 468.9L1007.8 467.6L1017.7 467.1L1027.5 467.9L1037.4 468.6L1047.3 440.9L1057.2 468.9L1067.1 460.1L1077.0 466.7L1086.8 465.2L1096.7 468.2L1106.6 468.6L1116.5 465.6L1126.4 468.3L1136.3 468.9L1146.1 468.9L1156.0 467.9L1165.9 466.4L1175.8 467.6L1185.7 465.2L1195.6 460.1L1205.4 469.3L1215.3 1595.8L1225.2 463.4L1235.1 466.7L1245.0 466.4L1254.9 467.9L1264.7 467.1L1274.6 466.4L1284.5 464.9L1294.4 466.7L1304.3 459.6L1314.2 464.6L1324.0 466.7L1333.9 467.4L1343.8 465.6L1353.7 463.1L1363.6 468.6L1373.5 466.4L1383.3 463.7L1393.2 466.7L1403.1 461.4L1413.0 465.6L1422.9 448.7L1432.8 465.6L1432.8 468.90000000000003Z" fill="#f5b77a"/><path d="M968.2 473.8L978.1 1595.8L988.0 434.1L997.9 468.9L1007.8 467.6L1017.7 467.1L1027.5 467.9L1037.4 468.6L1047.3 440.9L1057.2 468.9L1067.1 460.1L1077.0 466.7L1086.8 465.2L1096.7 468.2L1106.6 468.6L1116.5 465.6L1126.4 468.3L1136.3 468.9L1146.1 468.9L1156.0 467.9L1165.9 466.4L1175.8 467.6L1185.7 465.2L1195.6 460.1L1205.4 469.3L1215.3 1595.8L1225.2 463.4L1235.1 466.7L1245.0 466.4L1254.9 467.9L1264.7 467.1L1274.6 466.4L1284.5 464.9L1294.4 466.7L1304.3 459.6L1314.2 464.6L1324.0 466.7L1333.9 467.4L1343.8 465.6L1353.7 463.1L1363.6 468.6L1373.5 466.4L1383.3 463.7L1393.2 466.7L1403.1 461.4L1413.0 465.6L1422.9 448.7L1432.8 465.6" fill="none" stroke="#8a8f9a" stroke-width="0.8" stroke-opacity="0.6"/><path d="M968.2 468.3H1432.8" stroke="#f2a25e" stroke-width="1.2"/></g><path d="M846 234.5H1456" stroke="#c8c8c8" stroke-width="1"/><path d="M846 312.8H1456" stroke="#c8c8c8" stroke-width="1"/><path d="M846 391.1H1456" stroke="#c8c8c8" stroke-width="1"/><path d="M846 469.4H1456" stroke="#c8c8c8" stroke-width="1"/><path d="M945.5 234V468.9" stroke="#d6d6d6" stroke-width="1"/></svg><div class="a" style="left:539px;width:400px;text-align:right;top:247.61px;font-size:10.5px;line-height:10.5px;color:#777;">$40K</div>
<div class="a" style="left:539px;width:400px;text-align:right;top:277.71px;font-size:10.5px;line-height:10.5px;color:#777;">$20K</div>
<div class="a" style="left:539px;width:400px;text-align:right;top:299.91px;font-size:10.5px;line-height:10.5px;color:#777;">$0K</div>
<div class="a" style="left:851px;top:267.86px;font-size:10.8px;line-height:10.8px;color:#707070;">Furniture</div>
<div class="a" style="left:539px;width:400px;text-align:right;top:325.91px;font-size:10.5px;line-height:10.5px;color:#777;">$40K</div>
<div class="a" style="left:539px;width:400px;text-align:right;top:356.01px;font-size:10.5px;line-height:10.5px;color:#777;">$20K</div>
<div class="a" style="left:539px;width:400px;text-align:right;top:378.21px;font-size:10.5px;line-height:10.5px;color:#777;">$0K</div>
<div class="a" style="left:851px;top:339.16px;font-size:10.8px;line-height:10.8px;color:#707070;">Office</div>
<div class="a" style="left:851px;top:353.66px;font-size:10.8px;line-height:10.8px;color:#707070;">Supplies</div>
<div class="a" style="left:539px;width:400px;text-align:right;top:404.21px;font-size:10.5px;line-height:10.5px;color:#777;">$40K</div>
<div class="a" style="left:539px;width:400px;text-align:right;top:434.31px;font-size:10.5px;line-height:10.5px;color:#777;">$20K</div>
<div class="a" style="left:539px;width:400px;text-align:right;top:456.51px;font-size:10.5px;line-height:10.5px;color:#777;">$0K</div>
<div class="a" style="left:851px;top:425.46px;font-size:10.8px;line-height:10.8px;color:#707070;">Technology</div>
<div class="a" style="left:768.25px;width:400px;text-align:center;top:477.51px;font-size:11.8px;line-height:11.8px;color:#777;">2014</div>
<div class="a" style="left:886.846px;width:400px;text-align:center;top:477.51px;font-size:11.8px;line-height:11.8px;color:#777;">2015</div>
<div class="a" style="left:1005.442px;width:400px;text-align:center;top:477.51px;font-size:11.8px;line-height:11.8px;color:#777;">2016</div>
<div class="a" style="left:1124.038px;width:400px;text-align:center;top:477.51px;font-size:11.8px;line-height:11.8px;color:#777;">2017</div>
<div class="a" style="left:1242.634px;width:400px;text-align:center;top:477.51px;font-size:11.8px;line-height:11.8px;color:#777;">2018</div>
<svg style="left:0;top:0" width="1600" height="858" viewBox="0 0 1600 858"><defs><clipPath id="cp966_0"><rect x="943" y="534.7" width="513" height="77.8"/></clipPath><clipPath id="cp966_1"><rect x="943" y="613.0" width="513" height="77.8"/></clipPath><clipPath id="cp966_2"><rect x="943" y="691.3000000000001" width="513" height="77.8"/></clipPath></defs><path d="M943 538.0H1456" stroke="#efefef" stroke-width="1"/><path d="M943 563.0H1456" stroke="#efefef" stroke-width="1"/><path d="M943 588.0H1456" stroke="#efefef" stroke-width="1"/><path d="M943 613.0H1456" stroke="#efefef" stroke-width="1"/><path d="M943 616.3H1456" stroke="#efefef" stroke-width="1"/><path d="M943 641.3H1456" stroke="#efefef" stroke-width="1"/><path d="M943 666.3H1456" stroke="#efefef" stroke-width="1"/><path d="M943 691.3H1456" stroke="#efefef" stroke-width="1"/><path d="M943 694.6H1456" stroke="#efefef" stroke-width="1"/><path d="M943 719.6H1456" stroke="#efefef" stroke-width="1"/><path d="M943 744.6H1456" stroke="#efefef" stroke-width="1"/><path d="M943 769.6H1456" stroke="#efefef" stroke-width="1"/><g clip-path="url(#cp966_0)"><path d="M966.0 612.5L966.0 604.1L975.9 608.9L985.8 597.9L995.7 601.1L1005.6 596.3L1015.5 580.5L1025.5 586.8L1035.4 592.2L1045.3 538.1L1055.2 591.7L1065.1 554.5L1075.0 565.9L1084.9 595.4L1094.8 600.8L1104.7 591.1L1114.7 584.4L1124.6 586.5L1134.5 596.3L1144.4 587.3L1154.3 586.8L1164.2 564.2L1174.1 591.1L1184.0 571.1L1193.9 563.4L1203.8 604.7L1213.8 593.2L1223.7 581.6L1233.6 594.6L1243.5 572.7L1253.4 582.4L1263.3 584.6L1273.2 595.0L1283.1 559.7L1293.0 599.8L1302.9 560.8L1312.8 551.2L1322.8 582.4L1332.7 605.5L1342.6 569.0L1352.5 600.3L1362.4 586.5L1372.3 587.3L1382.2 588.6L1392.1 573.5L1402.0 558.4L1412.0 582.9L1421.9 550.8L1431.8 549.9L1431.8 612.5Z" fill="#8eaac9" fill-opacity="0.97"/><path d="M966.0 604.1L975.9 608.9L985.8 597.9L995.7 601.1L1005.6 596.3L1015.5 580.5L1025.5 586.8L1035.4 592.2L1045.3 538.1L1055.2 591.7L1065.1 554.5L1075.0 565.9L1084.9 595.4L1094.8 600.8L1104.7 591.1L1114.7 584.4L1124.6 586.5L1134.5 596.3L1144.4 587.3L1154.3 586.8L1164.2 564.2L1174.1 591.1L1184.0 571.1L1193.9 563.4L1203.8 604.7L1213.8 593.2L1223.7 581.6L1233.6 594.6L1243.5 572.7L1253.4 582.4L1263.3 584.6L1273.2 595.0L1283.1 559.7L1293.0 599.8L1302.9 560.8L1312.8 551.2L1322.8 582.4L1332.7 605.5L1342.6 569.0L1352.5 600.3L1362.4 586.5L1372.3 587.3L1382.2 588.6L1392.1 573.5L1402.0 558.4L1412.0 582.9L1421.9 550.8L1431.8 549.9" fill="none" stroke="#5f83aa" stroke-width="0.9" stroke-opacity="0.8"/><path d="M966.0 612.5L966.0 612.2L975.9 612.2L985.8 608.4L995.7 611.2L1005.6 609.6L1015.5 608.4L1025.5 608.4L1035.4 609.3L1045.3 592.5L1055.2 609.3L1065.1 593.8L1075.0 606.0L1084.9 599.2L1094.8 610.9L1104.7 612.2L1114.7 604.7L1124.6 609.6L1134.5 611.2L1144.4 606.0L1154.3 608.0L1164.2 603.1L1174.1 603.9L1184.0 605.2L1193.9 599.2L1203.8 608.4L1213.8 612.2L1223.7 601.5L1233.6 606.5L1243.5 608.8L1253.4 609.3L1263.3 609.6L1273.2 610.1L1283.1 600.8L1293.0 609.3L1302.9 601.1L1312.8 608.9L1322.8 606.8L1332.7 610.1L1342.6 605.5L1352.5 611.2L1362.4 606.0L1372.3 608.1L1382.2 603.6L1392.1 602.8L1402.0 600.8L1412.0 605.5L1421.9 596.7L1431.8 601.1L1431.8 612.5Z" fill="#f5b77a"/><path d="M966.0 612.2L975.9 612.2L985.8 608.4L995.7 611.2L1005.6 609.6L1015.5 608.4L1025.5 608.4L1035.4 609.3L1045.3 592.5L1055.2 609.3L1065.1 593.8L1075.0 606.0L1084.9 599.2L1094.8 610.9L1104.7 612.2L1114.7 604.7L1124.6 609.6L1134.5 611.2L1144.4 606.0L1154.3 608.0L1164.2 603.1L1174.1 603.9L1184.0 605.2L1193.9 599.2L1203.8 608.4L1213.8 612.2L1223.7 601.5L1233.6 606.5L1243.5 608.8L1253.4 609.3L1263.3 609.6L1273.2 610.1L1283.1 600.8L1293.0 609.3L1302.9 601.1L1312.8 608.9L1322.8 606.8L1332.7 610.1L1342.6 605.5L1352.5 611.2L1362.4 606.0L1372.3 608.1L1382.2 603.6L1392.1 602.8L1402.0 600.8L1412.0 605.5L1421.9 596.7L1431.8 601.1" fill="none" stroke="#8a8f9a" stroke-width="0.8" stroke-opacity="0.6"/><path d="M966.0 611.9H1431.8" stroke="#f2a25e" stroke-width="1.2"/></g><g clip-path="url(#cp966_1)"><path d="M966.0 690.8L966.0 688.5L975.9 689.7L985.8 677.0L995.7 673.4L1005.6 679.9L1015.5 685.9L1025.5 678.3L1035.4 681.5L1045.3 671.8L1055.2 675.0L1065.1 664.8L1075.0 665.3L1084.9 686.4L1094.8 687.6L1104.7 670.7L1114.7 685.9L1124.6 684.5L1134.5 679.1L1144.4 682.0L1154.3 675.9L1164.2 670.2L1174.1 679.4L1184.0 656.8L1193.9 669.7L1203.8 678.0L1213.8 686.9L1223.7 672.9L1233.6 670.7L1243.5 667.7L1253.4 680.7L1263.3 674.2L1273.2 674.6L1283.1 668.5L1293.0 651.0L1302.9 657.7L1312.8 646.6L1322.8 675.0L1332.7 680.7L1342.6 670.2L1352.5 672.6L1362.4 673.1L1372.3 666.1L1382.2 669.7L1392.1 658.8L1402.0 660.7L1412.0 659.9L1421.9 635.2L1431.8 664.8L1431.8 690.8Z" fill="#8eaac9" fill-opacity="0.97"/><path d="M966.0 688.5L975.9 689.7L985.8 677.0L995.7 673.4L1005.6 679.9L1015.5 685.9L1025.5 678.3L1035.4 681.5L1045.3 671.8L1055.2 675.0L1065.1 664.8L1075.0 665.3L1084.9 686.4L1094.8 687.6L1104.7 670.7L1114.7 685.9L1124.6 684.5L1134.5 679.1L1144.4 682.0L1154.3 675.9L1164.2 670.2L1174.1 679.4L1184.0 656.8L1193.9 669.7L1203.8 678.0L1213.8 686.9L1223.7 672.9L1233.6 670.7L1243.5 667.7L1253.4 680.7L1263.3 674.2L1273.2 674.6L1283.1 668.5L1293.0 651.0L1302.9 657.7L1312.8 646.6L1322.8 675.0L1332.7 680.7L1342.6 670.2L1352.5 672.6L1362.4 673.1L1372.3 666.1L1382.2 669.7L1392.1 658.8L1402.0 660.7L1412.0 659.9L1421.9 635.2L1431.8 664.8" fill="none" stroke="#5f83aa" stroke-width="0.9" stroke-opacity="0.8"/><path d="M966.0 690.8L966.0 1912.4L975.9 1912.4L985.8 685.9L995.7 688.9L1005.6 688.0L1015.5 688.0L1025.5 687.7L1035.4 691.3L1045.3 679.4L1055.2 688.0L1065.1 686.4L1075.0 686.9L1084.9 688.0L1094.8 690.2L1104.7 688.0L1114.7 690.5L1124.6 690.2L1134.5 686.7L1144.4 688.0L1154.3 688.0L1164.2 687.2L1174.1 687.6L1184.0 687.2L1193.9 687.6L1203.8 690.0L1213.8 690.5L1223.7 686.4L1233.6 688.0L1243.5 688.9L1253.4 689.2L1263.3 688.5L1273.2 688.9L1283.1 685.6L1293.0 688.0L1302.9 686.4L1312.8 680.4L1322.8 687.2L1332.7 1912.4L1342.6 690.8L1352.5 686.9L1362.4 687.2L1372.3 688.9L1382.2 690.5L1392.1 685.3L1402.0 683.5L1412.0 682.7L1421.9 671.0L1431.8 683.2L1431.8 690.8Z" fill="#f5b77a"/><path d="M966.0 1912.4L975.9 1912.4L985.8 685.9L995.7 688.9L1005.6 688.0L1015.5 688.0L1025.5 687.7L1035.4 691.3L1045.3 679.4L1055.2 688.0L1065.1 686.4L1075.0 686.9L1084.9 688.0L1094.8 690.2L1104.7 688.0L1114.7 690.5L1124.6 690.2L1134.5 686.7L1144.4 688.0L1154.3 688.0L1164.2 687.2L1174.1 687.6L1184.0 687.2L1193.9 687.6L1203.8 690.0L1213.8 690.5L1223.7 686.4L1233.6 688.0L1243.5 688.9L1253.4 689.2L1263.3 688.5L1273.2 688.9L1283.1 685.6L1293.0 688.0L1302.9 686.4L1312.8 680.4L1322.8 687.2L1332.7 1912.4L1342.6 690.8L1352.5 686.9L1362.4 687.2L1372.3 688.9L1382.2 690.5L1392.1 685.3L1402.0 683.5L1412.0 682.7L1421.9 671.0L1431.8 683.2" fill="none" stroke="#8a8f9a" stroke-width="0.8" stroke-opacity="0.6"/><path d="M966.0 690.1999999999999H1431.8" stroke="#f2a25e" stroke-width="1.2"/></g><g clip-path="url(#cp966_2)"><path d="M966.0 769.1L966.0 761.8L975.9 768.6L985.8 728.5L995.7 763.1L1005.6 767.0L1015.5 763.1L1025.5 764.6L1035.4 763.4L1045.3 760.7L1055.2 765.9L1065.1 755.3L1075.0 754.5L1084.9 768.6L1094.8 769.1L1104.7 762.6L1114.7 759.7L1124.6 764.7L1134.5 765.9L1144.4 766.7L1154.3 762.6L1164.2 757.2L1174.1 761.8L1184.0 749.6L1193.9 745.2L1203.8 765.0L1213.8 763.4L1223.7 753.3L1233.6 758.2L1243.5 761.0L1253.4 758.2L1263.3 764.7L1273.2 763.4L1283.1 752.4L1293.0 747.2L1302.9 754.8L1312.8 754.0L1322.8 758.5L1332.7 760.5L1342.6 760.2L1352.5 753.3L1362.4 757.4L1372.3 752.5L1382.2 756.6L1392.1 761.3L1402.0 743.9L1412.0 732.1L1421.9 739.0L1431.8 752.4L1431.8 769.1Z" fill="#8eaac9" fill-opacity="0.97"/><path d="M966.0 761.8L975.9 768.6L985.8 728.5L995.7 763.1L1005.6 767.0L1015.5 763.1L1025.5 764.6L1035.4 763.4L1045.3 760.7L1055.2 765.9L1065.1 755.3L1075.0 754.5L1084.9 768.6L1094.8 769.1L1104.7 762.6L1114.7 759.7L1124.6 764.7L1134.5 765.9L1144.4 766.7L1154.3 762.6L1164.2 757.2L1174.1 761.8L1184.0 749.6L1193.9 745.2L1203.8 765.0L1213.8 763.4L1223.7 753.3L1233.6 758.2L1243.5 761.0L1253.4 758.2L1263.3 764.7L1273.2 763.4L1283.1 752.4L1293.0 747.2L1302.9 754.8L1312.8 754.0L1322.8 758.5L1332.7 760.5L1342.6 760.2L1352.5 753.3L1362.4 757.4L1372.3 752.5L1382.2 756.6L1392.1 761.3L1402.0 743.9L1412.0 732.1L1421.9 739.0L1431.8 752.4" fill="none" stroke="#5f83aa" stroke-width="0.9" stroke-opacity="0.8"/><path d="M966.0 769.1L966.0 1990.3L975.9 769.1L985.8 739.0L995.7 767.5L1005.6 769.1L1015.5 769.4L1025.5 769.4L1035.4 769.4L1045.3 767.5L1055.2 769.1L1065.1 769.1L1075.0 768.6L1084.9 769.4L1094.8 769.4L1104.7 767.0L1114.7 766.3L1124.6 768.6L1134.5 768.0L1144.4 769.4L1154.3 767.2L1164.2 767.8L1174.1 768.3L1184.0 767.0L1193.9 768.6L1203.8 769.1L1213.8 769.4L1223.7 769.4L1233.6 765.4L1243.5 768.0L1253.4 767.5L1263.3 768.3L1273.2 766.3L1283.1 765.0L1293.0 768.0L1302.9 768.6L1312.8 765.5L1322.8 768.6L1332.7 764.7L1342.6 766.7L1352.5 761.0L1362.4 767.0L1372.3 765.0L1382.2 768.0L1392.1 768.6L1402.0 764.2L1412.0 762.6L1421.9 762.3L1431.8 769.4L1431.8 769.1Z" fill="#f5b77a"/><path d="M966.0 1990.3L975.9 769.1L985.8 739.0L995.7 767.5L1005.6 769.1L1015.5 769.4L1025.5 769.4L1035.4 769.4L1045.3 767.5L1055.2 769.1L1065.1 769.1L1075.0 768.6L1084.9 769.4L1094.8 769.4L1104.7 767.0L1114.7 766.3L1124.6 768.6L1134.5 768.0L1144.4 769.4L1154.3 767.2L1164.2 767.8L1174.1 768.3L1184.0 767.0L1193.9 768.6L1203.8 769.1L1213.8 769.4L1223.7 769.4L1233.6 765.4L1243.5 768.0L1253.4 767.5L1263.3 768.3L1273.2 766.3L1283.1 765.0L1293.0 768.0L1302.9 768.6L1312.8 765.5L1322.8 768.6L1332.7 764.7L1342.6 766.7L1352.5 761.0L1362.4 767.0L1372.3 765.0L1382.2 768.0L1392.1 768.6L1402.0 764.2L1412.0 762.6L1421.9 762.3L1431.8 769.4" fill="none" stroke="#8a8f9a" stroke-width="0.8" stroke-opacity="0.6"/><path d="M966.0 768.5H1431.8" stroke="#f2a25e" stroke-width="1.2"/></g><path d="M846 534.7H1456" stroke="#c8c8c8" stroke-width="1"/><path d="M846 613.0H1456" stroke="#c8c8c8" stroke-width="1"/><path d="M846 691.3H1456" stroke="#c8c8c8" stroke-width="1"/><path d="M846 769.6H1456" stroke="#c8c8c8" stroke-width="1"/><path d="M942.5 534.2V769.1" stroke="#d6d6d6" stroke-width="1"/></svg><div class="a" style="left:536px;width:400px;text-align:right;top:536.11px;font-size:10.5px;line-height:10.5px;color:#777;">$60K</div>
<div class="a" style="left:536px;width:400px;text-align:right;top:557.51px;font-size:10.5px;line-height:10.5px;color:#777;">$40K</div>
<div class="a" style="left:536px;width:400px;text-align:right;top:582.61px;font-size:10.5px;line-height:10.5px;color:#777;">$20K</div>
<div class="a" style="left:536px;width:400px;text-align:right;top:600.11px;font-size:10.5px;line-height:10.5px;color:#777;">$0K</div>
<div class="a" style="left:851px;top:567.86px;font-size:10.8px;line-height:10.8px;color:#707070;">Consumer</div>
<div class="a" style="left:536px;width:400px;text-align:right;top:614.41px;font-size:10.5px;line-height:10.5px;color:#777;">$60K</div>
<div class="a" style="left:536px;width:400px;text-align:right;top:635.81px;font-size:10.5px;line-height:10.5px;color:#777;">$40K</div>
<div class="a" style="left:536px;width:400px;text-align:right;top:660.91px;font-size:10.5px;line-height:10.5px;color:#777;">$20K</div>
<div class="a" style="left:536px;width:400px;text-align:right;top:678.41px;font-size:10.5px;line-height:10.5px;color:#777;">$0K</div>
<div class="a" style="left:851px;top:646.76px;font-size:10.8px;line-height:10.8px;color:#707070;">Corporate</div>
<div class="a" style="left:536px;width:400px;text-align:right;top:692.71px;font-size:10.5px;line-height:10.5px;color:#777;">$60K</div>
<div class="a" style="left:536px;width:400px;text-align:right;top:714.11px;font-size:10.5px;line-height:10.5px;color:#777;">$40K</div>
<div class="a" style="left:536px;width:400px;text-align:right;top:739.21px;font-size:10.5px;line-height:10.5px;color:#777;">$20K</div>
<div class="a" style="left:536px;width:400px;text-align:right;top:756.71px;font-size:10.5px;line-height:10.5px;color:#777;">$0K</div>
<div class="a" style="left:851px;top:724.46px;font-size:10.8px;line-height:10.8px;color:#707070;">Home Office</div>
<div class="a" style="left:766.0px;width:400px;text-align:center;top:777.01px;font-size:11.8px;line-height:11.8px;color:#777;">2014</div>
<div class="a" style="left:884.9200000000001px;width:400px;text-align:center;top:777.01px;font-size:11.8px;line-height:11.8px;color:#777;">2015</div>
<div class="a" style="left:1003.8399999999999px;width:400px;text-align:center;top:777.01px;font-size:11.8px;line-height:11.8px;color:#777;">2016</div>
<div class="a" style="left:1122.76px;width:400px;text-align:center;top:777.01px;font-size:11.8px;line-height:11.8px;color:#777;">2017</div>
<div class="a" style="left:1241.68px;width:400px;text-align:center;top:777.01px;font-size:11.8px;line-height:11.8px;color:#777;">2018</div>

</body></html>
